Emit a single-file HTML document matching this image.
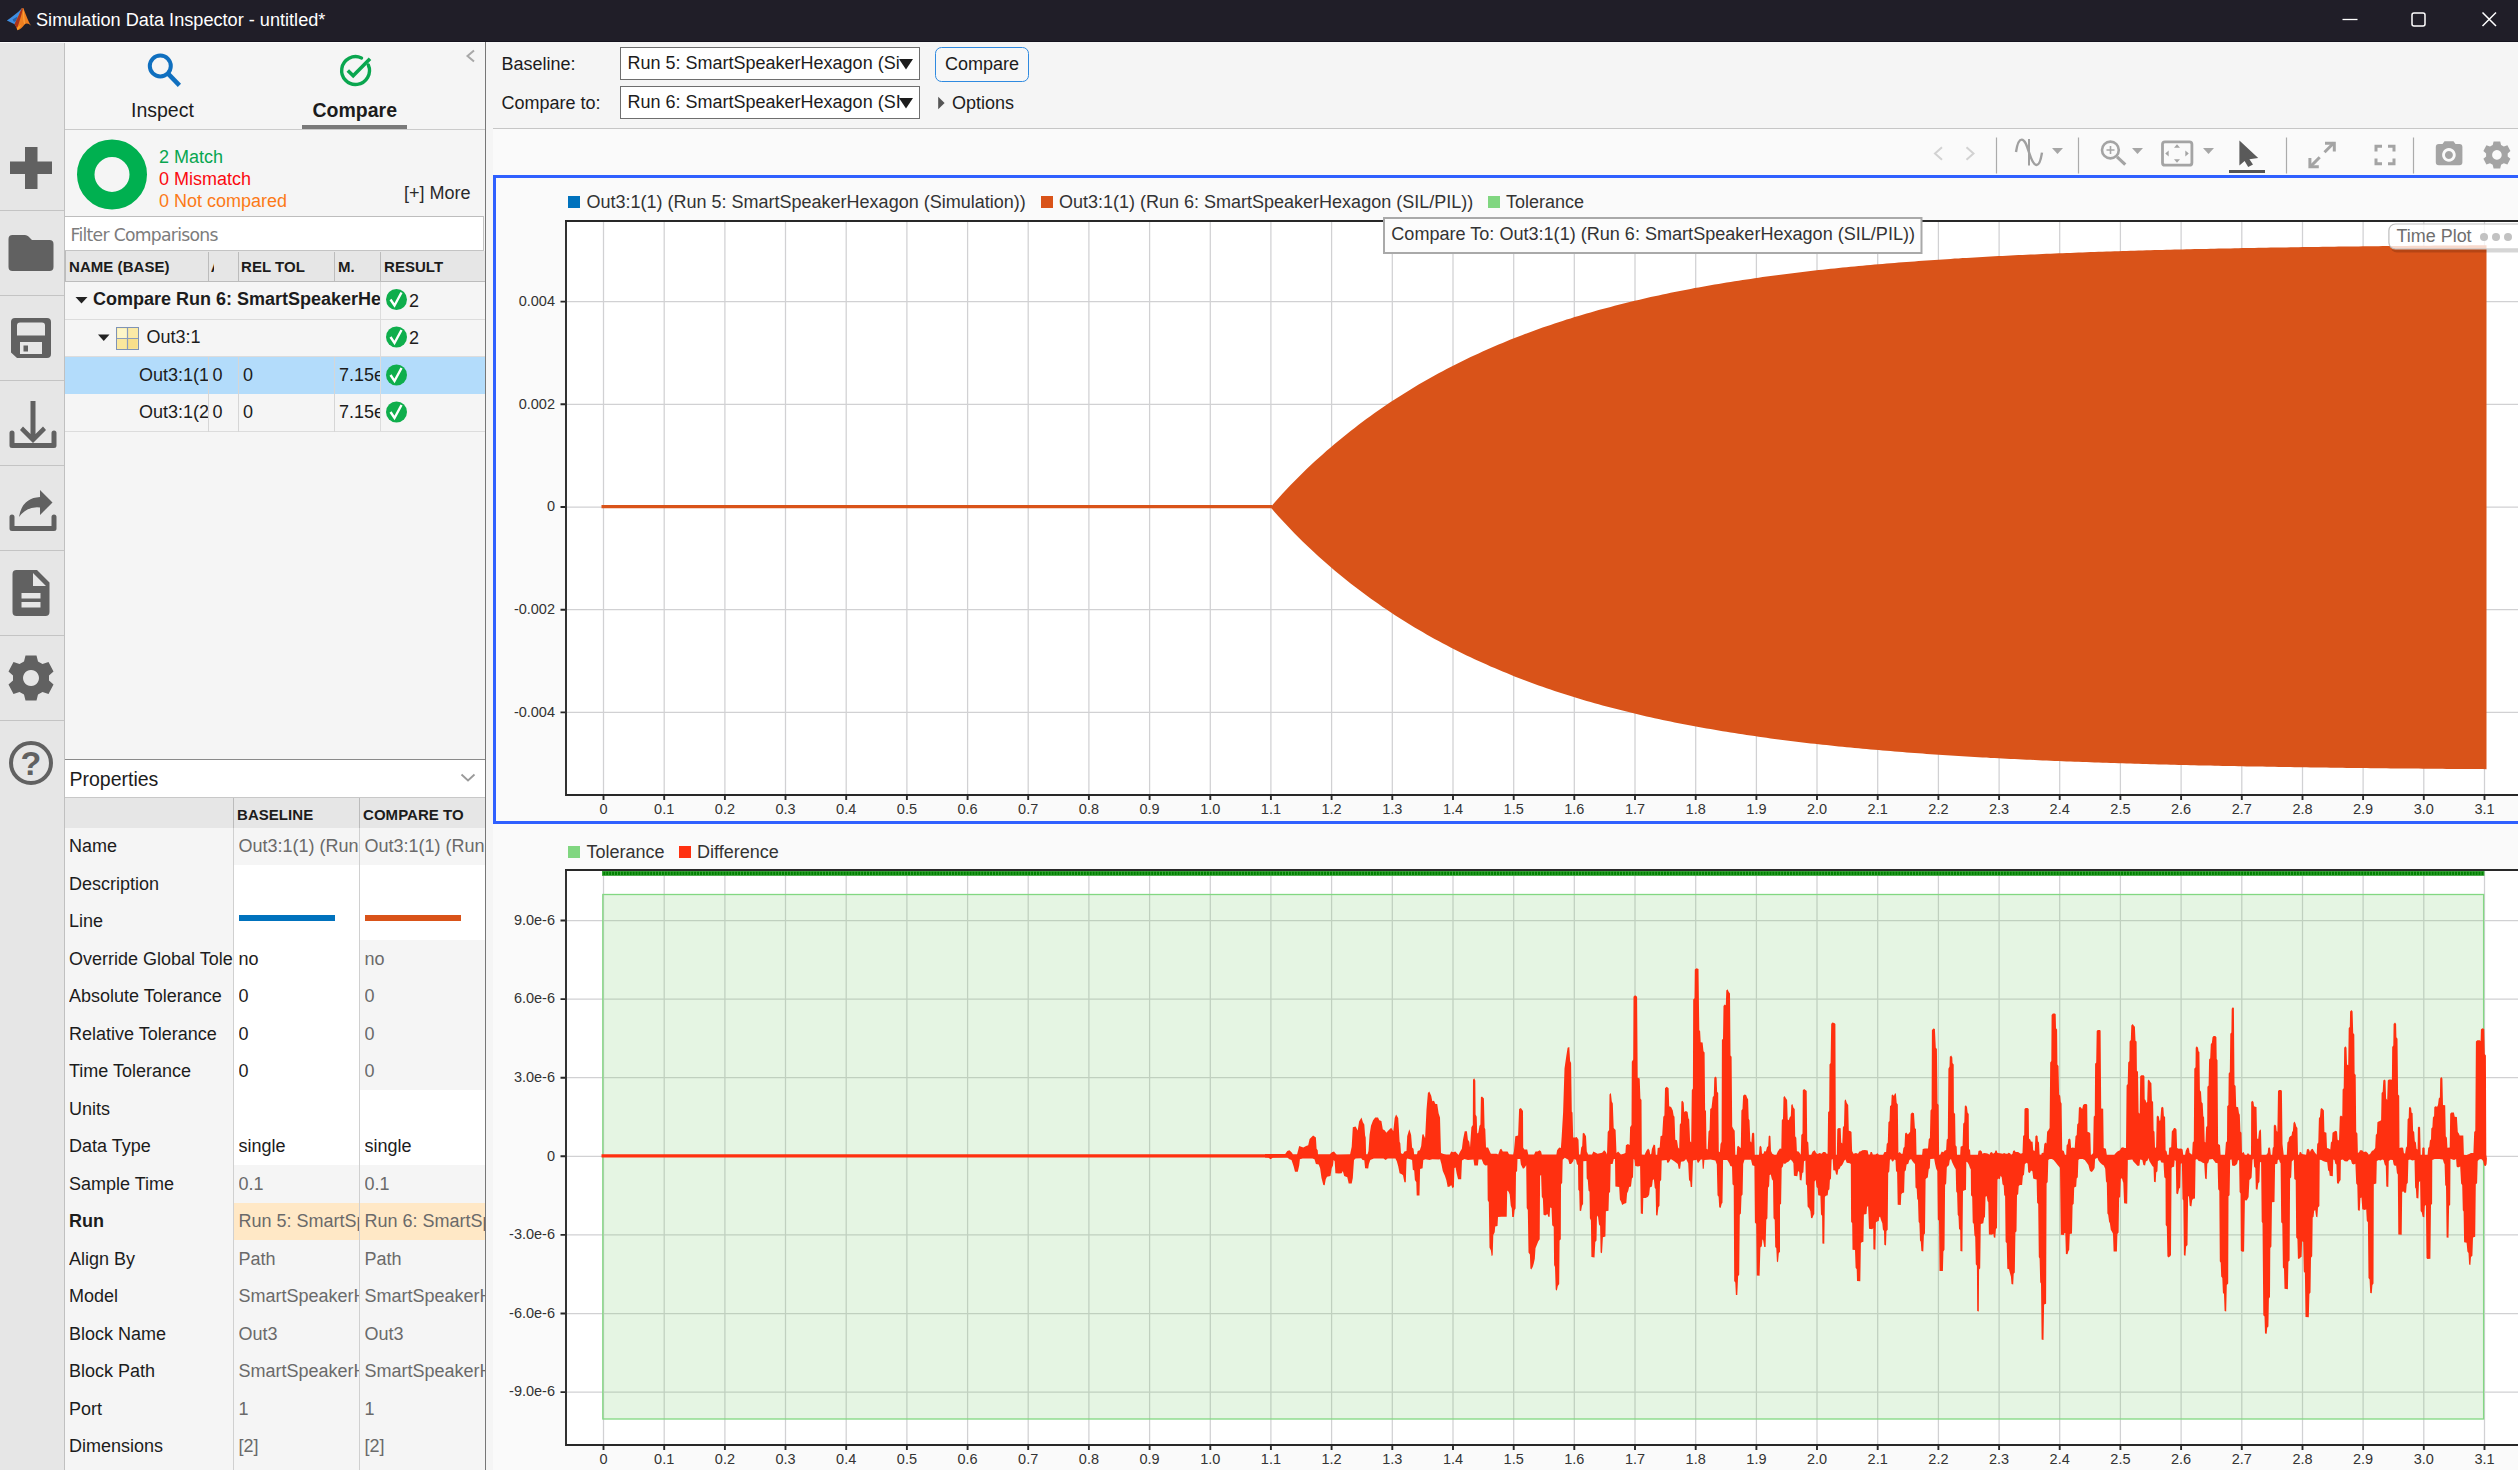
<!DOCTYPE html>
<html lang="en">
<head>
<meta charset="utf-8">
<title>Simulation Data Inspector - untitled*</title>
<style>
*{box-sizing:border-box;margin:0;padding:0}
html,body{width:2518px;height:1470px;overflow:hidden;background:#f5f5f5}
body{font-family:"Liberation Sans",Arial,sans-serif;font-size:18px;color:#1c1c1c;position:relative}
.abs{position:absolute}
.t{position:absolute;white-space:nowrap;line-height:1}
#titlebar{left:0;top:0;width:2518px;height:42px;background:#201e28}
#titlebar .t{color:#fff;font-size:18.15px;left:36px;top:11px}
#ltb{left:0;top:42px;width:64px;height:1428px;background:#e6e6e6}
#ltbline{left:64px;top:43px;width:1px;height:1427px;background:#c0c0c0}
.sep{position:absolute;left:0;width:64px;height:1px;background:#c4c4c4}
#lp{left:65px;top:42px;width:420px;height:1428px;background:#f5f5f5}
#divider{left:485px;top:42px;width:1px;height:1428px;background:#777}
.hdr{font-weight:bold;font-size:15px;letter-spacing:0.05px;color:#1c1c1c}
.row{position:absolute;left:65px;width:420px;height:37.5px}
.gray{color:#6a6a6a}
</style>
</head>
<body>
<div id="titlebar" class="abs">
<div class="abs tb-dark" style="left:0;top:41px;width:2518px;height:1px;background:#15131e"></div>
<svg class="abs" style="left:6px;top:7px" width="27" height="25" viewBox="0 0 27 25">
<path d="M0.9 13.5 C6 10 11.5 6 15.9 1.3 L16.6 2.6 C13.5 7.5 11 12.5 8.6 17.3 Z" fill="#3f8fe2"/>
<path d="M6.5 12.5 L11.5 9.5 L10.5 13.5 L8 15 Z" fill="#2a62a8"/>
<path d="M15.9 1.3 L17.3 0.9 C19 5 21.5 13 25.2 18.8 C22.5 16.3 20.2 15.8 18.6 17.6 C16.5 20.3 14 23 11.6 23.3 L9.6 18.8 L8.6 17.3 C11.5 11 13.8 6 15.9 1.3 Z" fill="#ef7f1f"/>
<path d="M15.9 1.3 L16.9 1.4 C15.5 8 13.5 15 10.9 21.6 L9.6 18.8 L8.6 17.3 C11.5 11 13.8 6 15.9 1.3 Z" fill="#a9331c"/>
<path d="M17.3 0.9 C18.2 6 18.4 11 18.9 17.3 C17.6 17 16.8 11 17.3 0.9 Z" fill="#ffa23e"/>
<path d="M11.6 23.3 C13 21.5 14.2 19.8 15.2 18 L12.2 19.8 L10.9 21.6 Z" fill="#ffa028"/>
</svg>
<div class="t">Simulation Data Inspector - untitled*</div>
<svg class="abs" style="left:2330px;top:5px" width="180" height="30" viewBox="0 0 180 30">
<path d="M12.5 14.5 H27.5" stroke="#fff" stroke-width="1.3" fill="none"/>
<rect x="82" y="8" width="13" height="13" rx="2" stroke="#fff" stroke-width="1.5" fill="none"/>
<path d="M152.5 7.5 L166 21 M166 7.5 L152.5 21" stroke="#fff" stroke-width="1.5" fill="none"/>
</svg>
</div>
<div class="abs" style="left:0;top:42px;width:485px;height:1px;background:#fcfcfc;z-index:5"></div>
<div id="ltb" class="abs"></div>
<div id="ltbline" class="abs"></div>
<div class="sep" style="top:210px"></div>
<div class="sep" style="top:295px"></div>
<div class="sep" style="top:380px"></div>
<div class="sep" style="top:465px"></div>
<div class="sep" style="top:550px"></div>
<div class="sep" style="top:635px"></div>
<div class="sep" style="top:720px"></div>
<svg class="abs" style="left:0;top:130px" width="64" height="680" viewBox="0 130 64 680" fill="#616161">
<!-- plus -->
<path d="M25 147 H37.5 V161.5 H52 V174 H37.5 V189 H25 V174 H10 V161.5 H25 Z"/>
<!-- folder -->
<path d="M12.5 235 H25 Q27 235 28.5 236.5 L32 240 H49.5 Q53.5 240 53.5 244 V267 Q53.5 271 49.5 271 H12.5 Q8.5 271 8.5 267 V239 Q8.5 235 12.5 235 Z"/>
<!-- save -->
<path fill-rule="evenodd" d="M15 318 H47 Q51 318 51 322 V354 Q51 358 47 358 H17 L11 352.5 V322 Q11 318 15 318 Z M20 322.5 Q17 322.5 17 325.5 V335.5 H45 V325.5 Q45 322.5 42 322.5 Z M20 342 V354 H42 V342 Z M23.5 345.5 H28 V351.5 H23.5 Z"/>
<!-- download -->
<path d="M30.5 401 H35.500 V434 L43 426.500 L46 430 L33 443 L20 430 L23 426.500 L30.500 434 Z"/>
<path d="M12 433 V445.500 H54 V433" stroke="#616161" stroke-width="5" fill="none" stroke-linejoin="round" stroke-linecap="round"/>
<!-- share -->
<path d="M12 517 V528.500 H54 V517" stroke="#616161" stroke-width="5" fill="none" stroke-linejoin="round" stroke-linecap="round"/>
<path d="M40 490 L52.500 502.500 L40 515 V507.500 Q27 506 19 517 Q22 498 40 497 Z"/>
<!-- doc -->
<path fill-rule="evenodd" d="M16.500 570 H37 L49.500 582.500 V612 Q49.500 616 45.500 616 H16.500 Q12.500 616 12.500 612 V574 Q12.500 570 16.500 570 Z M33 573 V586 H46 Z M21.500 593 V598.500 H40.500 V593 Z M21.500 602 V607.500 H40.500 V602 Z"/>
<!-- gear -->
<g transform="translate(31,678)">
<path fill-rule="evenodd" d="M-5.500 -22.500 H5.500 L7 -16.500 L11.500 -14 L17.500 -16 L22.500 -6.500 L18 -2.500 V2.500 L22.500 6.500 L17.500 16 L11.500 14 L7 16.500 L5.500 22.500 H-5.500 L-7 16.500 L-11.500 14 L-17.500 16 L-22.500 6.500 L-18 2.500 V-2.500 L-22.500 -6.500 L-17.500 -16 L-11.500 -14 L-7 -16.500 Z M0 -8 A8 8 0 1 0 0.010 -8 Z"/>
</g>
<!-- help -->
<circle cx="31" cy="763" r="20" fill="none" stroke="#616161" stroke-width="4"/>
<text x="31" y="775" text-anchor="middle" font-family="Liberation Sans, Arial, sans-serif" font-weight="bold" font-size="34" fill="#616161">?</text>
</svg>
<div id="lp" class="abs"></div>
<!-- tabs -->
<svg class="abs" style="left:140px;top:48px" width="50" height="46" viewBox="140 48 50 46">
<circle cx="160.300" cy="66" r="10.500" fill="none" stroke="#0f6fbf" stroke-width="4"/>
<path d="M167.800 73.400 L179.400 85.400" stroke="#0f6fbf" stroke-width="4.500" fill="none"/>
</svg>
<div class="t" style="left:131px;top:101px;font-size:19.5px">Inspect</div>
<svg class="abs" style="left:335px;top:50px" width="42" height="42" viewBox="335 50 42 42">
<path d="M368.300 65 A13.900 13.900 0 1 1 361.500 58" fill="none" stroke="#0aa64f" stroke-width="3.400" stroke-linecap="round"/>
<path d="M347.800 70.400 L353.200 75.800 L370 58.800" fill="none" stroke="#0aa64f" stroke-width="3.600"/>
</svg>
<div class="t" style="left:312.500px;top:101px;font-size:19.5px;font-weight:bold">Compare</div>
<div class="abs" style="left:302px;top:125.300px;width:105px;height:3.700px;background:#7a7a7a"></div>
<svg class="abs" style="left:462px;top:46px" width="16" height="20" viewBox="0 0 16 20"><path d="M12 4.500 L5.500 10 L12 15.500" fill="none" stroke="#a8a8a8" stroke-width="2"/></svg>
<div class="abs" style="left:65px;top:129px;width:420px;height:1px;background:#cbcbcb"></div>
<!-- summary -->
<svg class="abs" style="left:75px;top:136.600px" width="76" height="76" viewBox="0 0 76 76"><circle cx="37" cy="37.500" r="26.250" fill="none" stroke="#00b050" stroke-width="17.500"/></svg>
<div class="t" style="left:159px;top:147.800px;font-size:18px;color:#08a650">2 Match</div>
<div class="t" style="left:159px;top:169.800px;font-size:18px;color:#fb0a10">0 Mismatch</div>
<div class="t" style="left:159px;top:191.800px;font-size:18px;color:#fc7a18">0 Not compared</div>
<div class="t" style="left:404px;top:184px;font-size:18px;color:#2a2a2a">[+] More</div>
<!-- filter -->
<div class="abs" style="left:65px;top:216px;width:419px;height:35px;background:#fff;border-top:1.300px solid #bdbdbd;border-bottom:1px solid #c4c4c4;border-right:1px solid #c4c4c4"></div>
<div class="t" style="left:70.500px;top:226.500px;font-size:17.2px;color:#7c7c7c;font-family:'DejaVu Sans','Liberation Sans',sans-serif;letter-spacing:-0.7px">Filter Comparisons</div>
<!-- table header -->
<div class="abs" style="left:65px;top:251px;width:420px;height:31px;background:#e6e6e6;border-bottom:1.300px solid #bcbcbc;border-left:1px solid #bcbcbc"></div>
<div class="abs" style="left:208px;top:252px;width:1px;height:29px;background:#bcbcbc"></div>
<div class="abs" style="left:238px;top:252px;width:1px;height:29px;background:#bcbcbc"></div>
<div class="abs" style="left:334px;top:252px;width:1px;height:29px;background:#bcbcbc"></div>
<div class="abs" style="left:380px;top:252px;width:1px;height:29px;background:#bcbcbc"></div>
<div class="t hdr" style="left:69px;top:259px">NAME (BASE)</div>
<div class="abs" style="left:210.800px;top:259px;width:2.800px;height:16px;overflow:hidden"><div class="t hdr" style="left:0;top:0">A</div></div>
<div class="t hdr" style="left:241px;top:259px">REL TOL</div>
<div class="t hdr" style="left:338px;top:259px">M.</div>
<div class="t hdr" style="left:384px;top:259px">RESULT</div>
<!-- rows -->
<div class="abs" style="left:65px;top:319px;width:420px;height:1px;background:#dcdcdc"></div>
<div class="abs" style="left:65px;top:356px;width:420px;height:1px;background:#dcdcdc"></div>
<div class="abs" style="left:65px;top:357px;width:420px;height:37px;background:#b3dcfb"></div>
<div class="abs" style="left:65px;top:431px;width:420px;height:1px;background:#dcdcdc"></div>
<div class="abs" style="left:380px;top:282px;width:1px;height:150px;background:#dcdcdc"></div>
<div class="abs" style="left:208px;top:357px;width:1px;height:75px;background:#d6d6d6"></div>
<div class="abs" style="left:238px;top:357px;width:1px;height:75px;background:#d6d6d6"></div>
<div class="abs" style="left:334px;top:357px;width:1px;height:75px;background:#d6d6d6"></div>
<svg class="abs" style="left:74px;top:294px" width="40" height="52" viewBox="74 294 40 52" fill="#222">
<path d="M75.500 297 H87.500 L81.500 303.500 Z"/>
<path d="M98 334.500 H109.500 L103.750 341 Z"/>
</svg>
<div class="abs" style="left:93px;top:289px;width:287px;height:24px;overflow:hidden"><div class="t" style="left:0;top:0.500px;font-weight:bold;font-size:18px">Compare Run 6: SmartSpeakerHexagon</div></div>
<svg class="abs" style="left:116px;top:327px" width="24" height="24" viewBox="0 0 24 24">
<rect x="0.500" y="0.500" width="22" height="22" fill="#fbe9a0" stroke="#7f93b5" stroke-width="1"/>
<rect x="1.500" y="1.500" width="9.500" height="9.500" fill="#fdf6c8"/>
<rect x="12" y="1.500" width="9.500" height="9.500" fill="#fbeaa6"/>
<rect x="1.500" y="12" width="9.500" height="9.500" fill="#fae79c"/>
<rect x="12" y="12" width="9.500" height="9.500" fill="#f8df8a"/>
<path d="M11.500 1 V22 M1 11.500 H22" stroke="#8a9cbc" stroke-width="1.200"/>
</svg>
<div class="t" style="left:146.500px;top:327.500px">Out3:1</div>
<div class="abs" style="left:139px;top:363px;width:69px;height:26px;overflow:hidden"><div class="t" style="left:0;top:3px">Out3:1(1)</div></div>
<div class="abs" style="left:139px;top:400px;width:69px;height:26px;overflow:hidden"><div class="t" style="left:0;top:2.500px">Out3:1(2)</div></div>
<div class="t" style="left:212.500px;top:366px">0</div><div class="t" style="left:243px;top:366px">0</div>
<div class="t" style="left:212.500px;top:402.500px">0</div><div class="t" style="left:243px;top:402.500px">0</div>
<div class="abs" style="left:339px;top:363px;width:41px;height:26px;overflow:hidden"><div class="t" style="left:0;top:3px">7.15e-06</div></div>
<div class="abs" style="left:339px;top:400px;width:41px;height:26px;overflow:hidden"><div class="t" style="left:0;top:2.500px">7.15e-06</div></div>
<svg class="abs" style="left:384px;top:286px" width="40" height="140" viewBox="384 286 40 140">
<g id="chk"><circle cx="396.500" cy="299.500" r="10.500" fill="#0fae4c"/><path d="M390.500 299.500 L394.500 305.500 L401.500 292.500" fill="none" stroke="#fff" stroke-width="2.400"/></g>
<use href="#chk" y="37.500"/><use href="#chk" y="75.500"/><use href="#chk" y="112.500"/>
</svg>
<div class="t" style="left:409px;top:291.500px">2</div>
<div class="t" style="left:409px;top:329px">2</div>
<!-- properties -->
<div class="abs" style="left:65px;top:759px;width:420px;height:39px;background:#fff;border-top:1.500px solid #8a8a8a;border-bottom:1px solid #c8c8c8"></div>
<div class="t" style="left:69.500px;top:769.700px;font-size:19.5px">Properties</div>
<svg class="abs" style="left:458px;top:770px" width="20" height="16" viewBox="0 0 20 16"><path d="M3.500 4.500 L10 10.500 L16.500 4.500" fill="none" stroke="#9a9a9a" stroke-width="1.800"/></svg>
<div class="abs" style="left:65px;top:798px;width:420px;height:30px;background:#e6e6e6"></div>
<div class="abs" style="left:233px;top:798px;width:1px;height:672px;background:#d0d0d0"></div>
<div class="abs" style="left:359px;top:798px;width:1px;height:672px;background:#d0d0d0"></div>
<div class="abs" style="left:233px;top:798px;width:1px;height:30px;background:#bcbcbc"></div>
<div class="abs" style="left:359px;top:798px;width:1px;height:30px;background:#bcbcbc"></div>
<div class="t hdr" style="left:237px;top:807px">BASELINE</div>
<div class="t hdr" style="left:363px;top:807px">COMPARE TO</div>
<div class="abs" style="left:69px;top:833.5px;width:164px;height:26px;overflow:hidden"><div class="t" style="left:0;top:3.500px">Name</div></div>
<div class="abs" style="left:238.5px;top:833.5px;width:120.5px;height:26px;overflow:hidden"><div class="t" style="left:0;top:3.500px;color:#6a6a6a">Out3:1(1) (Run 5</div></div>
<div class="abs" style="left:364.5px;top:833.5px;width:120.5px;height:26px;overflow:hidden"><div class="t" style="left:0;top:3.500px;color:#6a6a6a">Out3:1(1) (Run 6</div></div>
<div class="abs" style="left:234px;top:865.0px;width:125px;height:37.500px;background:#ffffff"></div>
<div class="abs" style="left:360px;top:865.0px;width:125px;height:37.500px;background:#ffffff"></div>
<div class="abs" style="left:69px;top:871.0px;width:164px;height:26px;overflow:hidden"><div class="t" style="left:0;top:3.500px">Description</div></div>
<div class="abs" style="left:234px;top:902.5px;width:125px;height:37.500px;background:#ffffff"></div>
<div class="abs" style="left:360px;top:902.5px;width:125px;height:37.500px;background:#ffffff"></div>
<div class="abs" style="left:69px;top:908.5px;width:164px;height:26px;overflow:hidden"><div class="t" style="left:0;top:3.500px">Line</div></div>
<div class="abs" style="left:234px;top:940.0px;width:125px;height:37.500px;background:#ffffff"></div>
<div class="abs" style="left:69px;top:946.0px;width:164px;height:26px;overflow:hidden"><div class="t" style="left:0;top:3.500px">Override Global Tolerance</div></div>
<div class="abs" style="left:238.5px;top:946.0px;width:120.5px;height:26px;overflow:hidden"><div class="t" style="left:0;top:3.500px;color:#1c1c1c">no</div></div>
<div class="abs" style="left:364.5px;top:946.0px;width:120.5px;height:26px;overflow:hidden"><div class="t" style="left:0;top:3.500px;color:#6a6a6a">no</div></div>
<div class="abs" style="left:234px;top:977.5px;width:125px;height:37.500px;background:#ffffff"></div>
<div class="abs" style="left:69px;top:983.5px;width:164px;height:26px;overflow:hidden"><div class="t" style="left:0;top:3.500px">Absolute Tolerance</div></div>
<div class="abs" style="left:238.5px;top:983.5px;width:120.5px;height:26px;overflow:hidden"><div class="t" style="left:0;top:3.500px;color:#1c1c1c">0</div></div>
<div class="abs" style="left:364.5px;top:983.5px;width:120.5px;height:26px;overflow:hidden"><div class="t" style="left:0;top:3.500px;color:#6a6a6a">0</div></div>
<div class="abs" style="left:234px;top:1015.0px;width:125px;height:37.500px;background:#ffffff"></div>
<div class="abs" style="left:69px;top:1021.0px;width:164px;height:26px;overflow:hidden"><div class="t" style="left:0;top:3.500px">Relative Tolerance</div></div>
<div class="abs" style="left:238.5px;top:1021.0px;width:120.5px;height:26px;overflow:hidden"><div class="t" style="left:0;top:3.500px;color:#1c1c1c">0</div></div>
<div class="abs" style="left:364.5px;top:1021.0px;width:120.5px;height:26px;overflow:hidden"><div class="t" style="left:0;top:3.500px;color:#6a6a6a">0</div></div>
<div class="abs" style="left:234px;top:1052.5px;width:125px;height:37.500px;background:#ffffff"></div>
<div class="abs" style="left:69px;top:1058.5px;width:164px;height:26px;overflow:hidden"><div class="t" style="left:0;top:3.500px">Time Tolerance</div></div>
<div class="abs" style="left:238.5px;top:1058.5px;width:120.5px;height:26px;overflow:hidden"><div class="t" style="left:0;top:3.500px;color:#1c1c1c">0</div></div>
<div class="abs" style="left:364.5px;top:1058.5px;width:120.5px;height:26px;overflow:hidden"><div class="t" style="left:0;top:3.500px;color:#6a6a6a">0</div></div>
<div class="abs" style="left:234px;top:1090.0px;width:125px;height:37.500px;background:#ffffff"></div>
<div class="abs" style="left:360px;top:1090.0px;width:125px;height:37.500px;background:#ffffff"></div>
<div class="abs" style="left:69px;top:1096.0px;width:164px;height:26px;overflow:hidden"><div class="t" style="left:0;top:3.500px">Units</div></div>
<div class="abs" style="left:234px;top:1127.5px;width:125px;height:37.500px;background:#ffffff"></div>
<div class="abs" style="left:360px;top:1127.5px;width:125px;height:37.500px;background:#ffffff"></div>
<div class="abs" style="left:69px;top:1133.5px;width:164px;height:26px;overflow:hidden"><div class="t" style="left:0;top:3.500px">Data Type</div></div>
<div class="abs" style="left:238.5px;top:1133.5px;width:120.5px;height:26px;overflow:hidden"><div class="t" style="left:0;top:3.500px;color:#1c1c1c">single</div></div>
<div class="abs" style="left:364.5px;top:1133.5px;width:120.5px;height:26px;overflow:hidden"><div class="t" style="left:0;top:3.500px;color:#1c1c1c">single</div></div>
<div class="abs" style="left:69px;top:1171.0px;width:164px;height:26px;overflow:hidden"><div class="t" style="left:0;top:3.500px">Sample Time</div></div>
<div class="abs" style="left:238.5px;top:1171.0px;width:120.5px;height:26px;overflow:hidden"><div class="t" style="left:0;top:3.500px;color:#6a6a6a">0.1</div></div>
<div class="abs" style="left:364.5px;top:1171.0px;width:120.5px;height:26px;overflow:hidden"><div class="t" style="left:0;top:3.500px;color:#6a6a6a">0.1</div></div>
<div class="abs" style="left:234px;top:1202.5px;width:125px;height:37.500px;background:#ffe8c6"></div>
<div class="abs" style="left:360px;top:1202.5px;width:125px;height:37.500px;background:#ffe8c6"></div>
<div class="abs" style="left:69px;top:1208.5px;width:164px;height:26px;overflow:hidden"><div class="t" style="left:0;top:3.500px;font-weight:bold">Run</div></div>
<div class="abs" style="left:238.5px;top:1208.5px;width:120.5px;height:26px;overflow:hidden"><div class="t" style="left:0;top:3.500px;color:#6a6a6a">Run 5: SmartSpeakerHexagon</div></div>
<div class="abs" style="left:364.5px;top:1208.5px;width:120.5px;height:26px;overflow:hidden"><div class="t" style="left:0;top:3.500px;color:#6a6a6a">Run 6: SmartSpeakerHexagon</div></div>
<div class="abs" style="left:69px;top:1246.0px;width:164px;height:26px;overflow:hidden"><div class="t" style="left:0;top:3.500px">Align By</div></div>
<div class="abs" style="left:238.5px;top:1246.0px;width:120.5px;height:26px;overflow:hidden"><div class="t" style="left:0;top:3.500px;color:#6a6a6a">Path</div></div>
<div class="abs" style="left:364.5px;top:1246.0px;width:120.5px;height:26px;overflow:hidden"><div class="t" style="left:0;top:3.500px;color:#6a6a6a">Path</div></div>
<div class="abs" style="left:69px;top:1283.5px;width:164px;height:26px;overflow:hidden"><div class="t" style="left:0;top:3.500px">Model</div></div>
<div class="abs" style="left:238.5px;top:1283.5px;width:120.5px;height:26px;overflow:hidden"><div class="t" style="left:0;top:3.500px;color:#6a6a6a">SmartSpeakerHexagon</div></div>
<div class="abs" style="left:364.5px;top:1283.5px;width:120.5px;height:26px;overflow:hidden"><div class="t" style="left:0;top:3.500px;color:#6a6a6a">SmartSpeakerHexagon</div></div>
<div class="abs" style="left:69px;top:1321.0px;width:164px;height:26px;overflow:hidden"><div class="t" style="left:0;top:3.500px">Block Name</div></div>
<div class="abs" style="left:238.5px;top:1321.0px;width:120.5px;height:26px;overflow:hidden"><div class="t" style="left:0;top:3.500px;color:#6a6a6a">Out3</div></div>
<div class="abs" style="left:364.5px;top:1321.0px;width:120.5px;height:26px;overflow:hidden"><div class="t" style="left:0;top:3.500px;color:#6a6a6a">Out3</div></div>
<div class="abs" style="left:69px;top:1358.5px;width:164px;height:26px;overflow:hidden"><div class="t" style="left:0;top:3.500px">Block Path</div></div>
<div class="abs" style="left:238.5px;top:1358.5px;width:120.5px;height:26px;overflow:hidden"><div class="t" style="left:0;top:3.500px;color:#6a6a6a">SmartSpeakerHexagon/Out3</div></div>
<div class="abs" style="left:364.5px;top:1358.5px;width:120.5px;height:26px;overflow:hidden"><div class="t" style="left:0;top:3.500px;color:#6a6a6a">SmartSpeakerHexagon/Out3</div></div>
<div class="abs" style="left:69px;top:1396.0px;width:164px;height:26px;overflow:hidden"><div class="t" style="left:0;top:3.500px">Port</div></div>
<div class="abs" style="left:238.5px;top:1396.0px;width:120.5px;height:26px;overflow:hidden"><div class="t" style="left:0;top:3.500px;color:#6a6a6a">1</div></div>
<div class="abs" style="left:364.5px;top:1396.0px;width:120.5px;height:26px;overflow:hidden"><div class="t" style="left:0;top:3.500px;color:#6a6a6a">1</div></div>
<div class="abs" style="left:69px;top:1433.5px;width:164px;height:26px;overflow:hidden"><div class="t" style="left:0;top:3.500px">Dimensions</div></div>
<div class="abs" style="left:238.5px;top:1433.5px;width:120.5px;height:26px;overflow:hidden"><div class="t" style="left:0;top:3.500px;color:#6a6a6a">[2]</div></div>
<div class="abs" style="left:364.5px;top:1433.5px;width:120.5px;height:26px;overflow:hidden"><div class="t" style="left:0;top:3.500px;color:#6a6a6a">[2]</div></div>
<div class="abs" style="left:239px;top:915px;width:96px;height:6px;background:#0072bd"></div>
<div class="abs" style="left:365px;top:915px;width:96px;height:6px;background:#d95319"></div>
<div id="divider" class="abs"></div>
<!-- right top controls -->
<div class="abs" style="left:493px;top:129px;width:2025px;height:1341px;background:#fafafa"></div>
<div class="abs" style="left:493px;top:128px;width:2025px;height:1px;background:#c6c6c6"></div>
<div class="t" style="left:501.500px;top:55px">Baseline:</div>
<div class="t" style="left:501.500px;top:94px">Compare to:</div>
<div class="abs" style="left:620px;top:47px;width:300px;height:32.500px;background:#fff;border:1px solid #6e6e6e"></div>
<div class="abs" style="left:620px;top:86px;width:300px;height:32.500px;background:#fff;border:1px solid #6e6e6e"></div>
<div class="abs" style="left:627.500px;top:50px;width:272px;height:26px;overflow:hidden"><div class="t" style="left:0;top:4px">Run 5: SmartSpeakerHexagon (Simulation)</div></div>
<div class="abs" style="left:627.500px;top:89px;width:272px;height:26px;overflow:hidden"><div class="t" style="left:0;top:4px">Run 6: SmartSpeakerHexagon (SIL/PIL)</div></div>
<svg class="abs" style="left:896px;top:47px" width="22" height="72" viewBox="896 47 22 72" fill="#1c1c1c"><path d="M899 59 H913 L906 69.500 Z"/><path d="M899 98 H913 L906 108.500 Z"/></svg>
<div class="abs" style="left:935px;top:47px;width:94px;height:35px;border:1.300px solid #2f8ae0;border-radius:6.500px;background:#f7f7f7"></div>
<div class="t" style="left:945px;top:55px">Compare</div>
<svg class="abs" style="left:936px;top:94px" width="12" height="18" viewBox="0 0 12 18"><path d="M2.200 2.800 L8.600 9 L2.200 15.200 Z" fill="#555"/></svg>
<div class="t" style="left:952px;top:94px">Options</div>
<!-- chart toolbar -->
<svg class="abs" style="left:1920px;top:130px" width="598" height="46" viewBox="1920 130 598 46">
<g fill="none" stroke="#d2d2d2" stroke-width="2">
<path d="M1942 147.300 L1935 153.500 L1942 159.700"/>
<path d="M1966.500 147.300 L1973.500 153.500 L1966.500 159.700"/>
</g>
<g stroke="#ababab" stroke-width="1.200">
<path d="M1996.500 137.500 V173.500"/><path d="M2078.500 137.500 V173.500"/><path d="M2286.500 137.500 V173.500"/><path d="M2413.500 137.500 V173.500"/>
</g>
<!-- sine -->
<path d="M2016 152 C2017.500 142 2019.500 139.600 2021.700 139.600 C2025 139.600 2027 146 2029 152.300 C2031 158.500 2033.500 165 2036.700 165 C2039.300 165 2041 159 2042 152.600" fill="none" stroke="#a0a0a0" stroke-width="2.400"/>
<path d="M2029 139 V165.500" stroke="#a0a0a0" stroke-width="2" fill="none"/>
<g fill="#a6a6a6">
<path d="M2052 148 H2063 L2057.500 154 Z"/>
<path d="M2132 148 H2143 L2137.500 154 Z"/>
<path d="M2203 148 H2214 L2208.500 154 Z"/>
</g>
<!-- zoom -->
<circle cx="2110.400" cy="150" r="8.400" fill="none" stroke="#a4a4a4" stroke-width="2.600"/>
<path d="M2117 156.800 L2125.300 164.600" stroke="#a4a4a4" stroke-width="3.200" fill="none"/>
<path d="M2106.500 150 H2114.500 M2110.500 146 V154" stroke="#a6a6a6" stroke-width="1.600" fill="none"/>
<!-- fit -->
<rect x="2162.500" y="141.800" width="29.400" height="23.400" rx="2.500" fill="none" stroke="#a4a4a4" stroke-width="2.800"/>
<g fill="#a4a4a4"><path d="M2174 147.700 L2177 144.200 L2180 147.700 Z"/><path d="M2174 159.300 L2177 162.800 L2180 159.300 Z"/><path d="M2168.700 150.500 L2165.200 153.500 L2168.700 156.500 Z"/><path d="M2185.300 150.500 L2188.800 153.500 L2185.300 156.500 Z"/></g>
<!-- cursor -->
<path d="M2239.400 140.500 L2239.400 165.500 L2244.600 161 L2248.200 167 L2253 164.500 L2249.400 159.200 L2258.200 158.100 Z" fill="#5a5a5a"/>
<rect x="2229" y="170" width="36" height="3" fill="#555"/>
<!-- expand -->
<g fill="none" stroke="#a4a4a4" stroke-width="3">
<path d="M2324.500 152.300 L2334 142.800"/><path d="M2325 143.200 H2334.300 V151.600"/>
<path d="M2319.700 157.300 L2310.400 166.600"/><path d="M2309.900 158 V166.700 H2318.800"/>
</g>
<!-- fullscreen -->
<g fill="none" stroke="#a4a4a4" stroke-width="3">
<path d="M2376 151.600 V146.300 H2382"/><path d="M2388 146.300 H2394 V151.600"/><path d="M2376 158.500 V163.800 H2382"/><path d="M2388 163.800 H2394 V158.500"/>
</g>
<!-- camera -->
<path fill-rule="evenodd" fill="#a4a4a4" d="M2444.500 141.200 H2453.500 L2455.500 144 H2459.400 Q2462.400 144 2462.400 147 V162.300 Q2462.400 165.300 2459.400 165.300 H2438.800 Q2435.800 165.300 2435.800 162.300 V147 Q2435.800 144 2438.800 144 H2442.500 Z M2448.900 148.100 A6.800 6.800 0 1 0 2448.910 148.100 Z M2448.900 150.900 A4 4 0 1 1 2448.890 150.900 Z"/>
<!-- gear -->
<g transform="translate(2496.900,154.900) scale(0.6)">
<path fill-rule="evenodd" fill="#a4a4a4" d="M-5.500 -22.500 H5.500 L7 -16.500 L11.500 -14 L17.500 -16 L22.500 -6.500 L18 -2.500 V2.500 L22.500 6.500 L17.500 16 L11.500 14 L7 16.500 L5.500 22.500 H-5.500 L-7 16.500 L-11.500 14 L-17.500 16 L-22.500 6.500 L-18 2.500 V-2.500 L-22.500 -6.500 L-17.500 -16 L-11.500 -14 L-7 -16.500 Z M0 -8 A8 8 0 1 0 0.010 -8 Z"/>
</g>
</svg>
<!-- top chart -->
<div class="abs" style="left:493px;top:175px;width:2040px;height:649px;border:3px solid #2f60ff;background:#fafafa"></div>
<svg class="abs" style="left:493px;top:175px" width="2025" height="655" viewBox="493 175 2025 655">
<rect x="566" y="221" width="1960" height="574" fill="#fff"/>
<path d="M603.5 222V794M664.2 222V794M724.9 222V794M785.5 222V794M846.2 222V794M906.9 222V794M967.6 222V794M1028.2 222V794M1088.9 222V794M1149.6 222V794M1210.3 222V794M1270.9 222V794M1331.6 222V794M1392.3 222V794M1453 222V794M1513.7 222V794M1574.3 222V794M1635 222V794M1695.7 222V794M1756.4 222V794M1817 222V794M1877.7 222V794M1938.4 222V794M1999.1 222V794M2059.7 222V794M2120.4 222V794M2181.1 222V794M2241.8 222V794M2302.5 222V794M2363.1 222V794M2423.8 222V794M2484.5 222V794" stroke="#d1d1d3" stroke-width="1.25" fill="none"/>
<path d="M567 301.6H2518M567 404.3H2518M567 507H2518M567 609.7H2518M567 712.4H2518" stroke="#d1d1d3" stroke-width="1.25" fill="none"/>
<path d="M1270.6 507.2 L1274.6 502.5 L1278.6 498 L1282.6 493.6 L1286.6 489.3 L1290.6 485.1 L1294.6 481 L1298.6 476.9 L1302.6 473 L1306.6 469.1 L1310.6 465.3 L1314.6 461.6 L1318.6 457.9 L1322.6 454.4 L1326.6 450.8 L1330.6 447.4 L1334.6 444 L1338.6 440.7 L1342.6 437.4 L1346.6 434.2 L1350.6 431 L1354.6 427.9 L1358.6 424.8 L1362.6 421.8 L1366.6 418.8 L1370.6 415.9 L1374.6 413.1 L1378.6 410.3 L1382.6 407.5 L1386.6 404.8 L1390.6 402.1 L1394.6 399.5 L1398.6 396.9 L1402.6 394.4 L1406.6 391.9 L1410.6 389.4 L1414.6 387 L1418.6 384.6 L1422.6 382.3 L1426.6 380 L1430.6 377.7 L1434.6 375.5 L1438.6 373.3 L1442.6 371.2 L1446.6 369.1 L1450.6 367 L1454.6 364.9 L1458.6 362.9 L1462.6 361 L1466.6 359 L1470.6 357.1 L1474.6 355.2 L1478.6 353.4 L1482.6 351.6 L1486.6 349.8 L1490.6 348 L1494.6 346.3 L1498.6 344.6 L1502.6 342.9 L1506.6 341.3 L1510.6 339.6 L1514.6 338 L1518.6 336.5 L1522.6 334.9 L1526.6 333.4 L1530.6 331.9 L1534.6 330.5 L1538.6 329 L1542.6 327.6 L1546.6 326.2 L1550.6 324.9 L1554.6 323.5 L1558.6 322.2 L1562.6 320.9 L1566.6 319.6 L1570.6 318.4 L1574.6 317.1 L1578.6 315.9 L1582.6 314.7 L1586.6 313.5 L1590.6 312.4 L1594.6 311.2 L1598.6 310.1 L1602.6 309 L1606.6 307.9 L1610.6 306.9 L1614.6 305.8 L1618.6 304.8 L1622.6 303.8 L1626.6 302.8 L1630.6 301.8 L1634.6 300.8 L1638.6 299.9 L1642.6 298.9 L1646.6 298 L1650.6 297.1 L1654.6 296.2 L1658.6 295.4 L1662.6 294.5 L1666.6 293.7 L1670.6 292.8 L1674.6 292 L1678.6 291.2 L1682.6 290.4 L1686.6 289.7 L1690.6 288.9 L1694.6 288.1 L1698.6 287.4 L1702.6 286.7 L1706.6 286 L1710.6 285.3 L1714.6 284.6 L1718.6 283.9 L1722.6 283.2 L1726.6 282.6 L1730.6 281.9 L1734.6 281.3 L1738.6 280.7 L1742.6 280.1 L1746.6 279.5 L1750.6 278.9 L1754.6 278.3 L1758.6 277.7 L1762.6 277.1 L1766.6 276.6 L1770.6 276 L1774.6 275.5 L1778.6 275 L1782.6 274.4 L1786.6 273.9 L1790.6 273.4 L1794.6 272.9 L1798.6 272.5 L1802.6 272 L1806.6 271.5 L1810.6 271 L1814.6 270.6 L1818.6 270.1 L1822.6 269.7 L1826.6 269.3 L1830.6 268.8 L1834.6 268.4 L1838.6 268 L1842.6 267.6 L1846.6 267.2 L1850.6 266.8 L1854.6 266.4 L1858.6 266.1 L1862.6 265.7 L1866.6 265.3 L1870.6 265 L1874.6 264.6 L1878.6 264.3 L1882.6 263.9 L1886.6 263.6 L1890.6 263.3 L1894.6 262.9 L1898.6 262.6 L1902.6 262.3 L1906.6 262 L1910.6 261.7 L1914.6 261.4 L1918.6 261.1 L1922.6 260.8 L1926.6 260.5 L1930.6 260.2 L1934.6 260 L1938.6 259.7 L1942.6 259.4 L1946.6 259.2 L1950.6 258.9 L1954.6 258.6 L1958.6 258.4 L1962.6 258.1 L1966.6 257.9 L1970.6 257.7 L1974.6 257.4 L1978.6 257.2 L1982.6 257 L1986.6 256.8 L1990.6 256.5 L1994.6 256.3 L1998.6 256.1 L2002.6 255.9 L2006.6 255.7 L2010.6 255.5 L2014.6 255.3 L2018.6 255.1 L2022.6 254.9 L2026.6 254.7 L2030.6 254.6 L2034.6 254.4 L2038.6 254.2 L2042.6 254 L2046.6 253.8 L2050.6 253.7 L2054.6 253.5 L2058.6 253.3 L2062.6 253.2 L2066.6 253 L2070.6 252.9 L2074.6 252.7 L2078.6 252.6 L2082.6 252.4 L2086.6 252.3 L2090.6 252.1 L2094.6 252 L2098.6 251.8 L2102.6 251.7 L2106.6 251.6 L2110.6 251.4 L2114.6 251.3 L2118.6 251.2 L2122.6 251.1 L2126.6 250.9 L2130.6 250.8 L2134.6 250.7 L2138.6 250.6 L2142.6 250.5 L2146.6 250.3 L2150.6 250.2 L2154.6 250.1 L2158.6 250 L2162.6 249.9 L2166.6 249.8 L2170.6 249.7 L2174.6 249.6 L2178.6 249.5 L2182.6 249.4 L2186.6 249.3 L2190.6 249.2 L2194.6 249.1 L2198.6 249 L2202.6 248.9 L2206.6 248.9 L2210.6 248.8 L2214.6 248.7 L2218.6 248.6 L2222.6 248.5 L2226.6 248.4 L2230.6 248.4 L2234.6 248.3 L2238.6 248.2 L2242.6 248.1 L2246.6 248 L2250.6 248 L2254.6 247.9 L2258.6 247.8 L2262.6 247.8 L2266.6 247.7 L2270.6 247.6 L2274.6 247.6 L2278.6 247.5 L2282.6 247.4 L2286.6 247.4 L2290.6 247.3 L2294.6 247.2 L2298.6 247.2 L2302.6 247.1 L2306.6 247.1 L2310.6 247 L2314.6 246.9 L2318.6 246.9 L2322.6 246.8 L2326.6 246.8 L2330.6 246.7 L2334.6 246.7 L2338.6 246.6 L2342.6 246.6 L2346.6 246.5 L2350.6 246.5 L2354.6 246.4 L2358.6 246.4 L2362.6 246.3 L2366.6 246.3 L2370.6 246.2 L2374.6 246.2 L2378.6 246.2 L2382.6 246.1 L2386.6 246.1 L2390.6 246 L2394.6 246 L2398.6 246 L2402.6 245.9 L2406.6 245.9 L2410.6 245.8 L2414.6 245.8 L2418.6 245.8 L2422.6 245.7 L2426.6 245.7 L2430.6 245.7 L2434.6 245.6 L2438.6 245.6 L2442.6 245.6 L2446.6 245.5 L2450.6 245.5 L2454.6 245.5 L2458.6 245.4 L2462.6 245.4 L2466.6 245.4 L2470.6 245.3 L2474.6 245.3 L2478.6 245.3 L2482.6 245.3 L2486.5 245.2 L2486.5 769.2 L2482.6 769.1 L2478.6 769.1 L2474.6 769.1 L2470.6 769.1 L2466.6 769 L2462.6 769 L2458.6 769 L2454.6 768.9 L2450.6 768.9 L2446.6 768.9 L2442.6 768.8 L2438.6 768.8 L2434.6 768.8 L2430.6 768.7 L2426.6 768.7 L2422.6 768.7 L2418.6 768.6 L2414.6 768.6 L2410.6 768.6 L2406.6 768.5 L2402.6 768.5 L2398.6 768.4 L2394.6 768.4 L2390.6 768.4 L2386.6 768.3 L2382.6 768.3 L2378.6 768.2 L2374.6 768.2 L2370.6 768.2 L2366.6 768.1 L2362.6 768.1 L2358.6 768 L2354.6 768 L2350.6 767.9 L2346.6 767.9 L2342.6 767.8 L2338.6 767.8 L2334.6 767.7 L2330.6 767.7 L2326.6 767.6 L2322.6 767.6 L2318.6 767.5 L2314.6 767.5 L2310.6 767.4 L2306.6 767.3 L2302.6 767.3 L2298.6 767.2 L2294.6 767.2 L2290.6 767.1 L2286.6 767 L2282.6 767 L2278.6 766.9 L2274.6 766.8 L2270.6 766.8 L2266.6 766.7 L2262.6 766.6 L2258.6 766.6 L2254.6 766.5 L2250.6 766.4 L2246.6 766.4 L2242.6 766.3 L2238.6 766.2 L2234.6 766.1 L2230.6 766 L2226.6 766 L2222.6 765.9 L2218.6 765.8 L2214.6 765.7 L2210.6 765.6 L2206.6 765.5 L2202.6 765.5 L2198.6 765.4 L2194.6 765.3 L2190.6 765.2 L2186.6 765.1 L2182.6 765 L2178.6 764.9 L2174.6 764.8 L2170.6 764.7 L2166.6 764.6 L2162.6 764.5 L2158.6 764.4 L2154.6 764.3 L2150.6 764.2 L2146.6 764.1 L2142.6 763.9 L2138.6 763.8 L2134.6 763.7 L2130.6 763.6 L2126.6 763.5 L2122.6 763.3 L2118.6 763.2 L2114.6 763.1 L2110.6 763 L2106.6 762.8 L2102.6 762.7 L2098.6 762.6 L2094.6 762.4 L2090.6 762.3 L2086.6 762.1 L2082.6 762 L2078.6 761.8 L2074.6 761.7 L2070.6 761.5 L2066.6 761.4 L2062.6 761.2 L2058.6 761.1 L2054.6 760.9 L2050.6 760.7 L2046.6 760.6 L2042.6 760.4 L2038.6 760.2 L2034.6 760 L2030.6 759.8 L2026.6 759.7 L2022.6 759.5 L2018.6 759.3 L2014.6 759.1 L2010.6 758.9 L2006.6 758.7 L2002.6 758.5 L1998.6 758.3 L1994.6 758.1 L1990.6 757.9 L1986.6 757.6 L1982.6 757.4 L1978.6 757.2 L1974.6 757 L1970.6 756.7 L1966.6 756.5 L1962.6 756.3 L1958.6 756 L1954.6 755.8 L1950.6 755.5 L1946.6 755.2 L1942.6 755 L1938.6 754.7 L1934.6 754.4 L1930.6 754.2 L1926.6 753.9 L1922.6 753.6 L1918.6 753.3 L1914.6 753 L1910.6 752.7 L1906.6 752.4 L1902.6 752.1 L1898.6 751.8 L1894.6 751.5 L1890.6 751.1 L1886.6 750.8 L1882.6 750.5 L1878.6 750.1 L1874.6 749.8 L1870.6 749.4 L1866.6 749.1 L1862.6 748.7 L1858.6 748.3 L1854.6 748 L1850.6 747.6 L1846.6 747.2 L1842.6 746.8 L1838.6 746.4 L1834.6 746 L1830.6 745.6 L1826.6 745.1 L1822.6 744.7 L1818.6 744.3 L1814.6 743.8 L1810.6 743.4 L1806.6 742.9 L1802.6 742.4 L1798.6 741.9 L1794.6 741.5 L1790.6 741 L1786.6 740.5 L1782.6 740 L1778.6 739.4 L1774.6 738.9 L1770.6 738.4 L1766.6 737.8 L1762.6 737.3 L1758.6 736.7 L1754.6 736.1 L1750.6 735.5 L1746.6 734.9 L1742.6 734.3 L1738.6 733.7 L1734.6 733.1 L1730.6 732.5 L1726.6 731.8 L1722.6 731.2 L1718.6 730.5 L1714.6 729.8 L1710.6 729.1 L1706.6 728.4 L1702.6 727.7 L1698.6 727 L1694.6 726.3 L1690.6 725.5 L1686.6 724.7 L1682.6 724 L1678.6 723.2 L1674.6 722.4 L1670.6 721.6 L1666.6 720.7 L1662.6 719.9 L1658.6 719 L1654.6 718.2 L1650.6 717.3 L1646.6 716.4 L1642.6 715.5 L1638.6 714.5 L1634.6 713.6 L1630.6 712.6 L1626.6 711.6 L1622.6 710.6 L1618.6 709.6 L1614.6 708.6 L1610.6 707.5 L1606.6 706.5 L1602.6 705.4 L1598.6 704.3 L1594.6 703.2 L1590.6 702 L1586.6 700.9 L1582.6 699.7 L1578.6 698.5 L1574.6 697.3 L1570.6 696 L1566.6 694.8 L1562.6 693.5 L1558.6 692.2 L1554.6 690.9 L1550.6 689.5 L1546.6 688.2 L1542.6 686.8 L1538.6 685.4 L1534.6 683.9 L1530.6 682.5 L1526.6 681 L1522.6 679.5 L1518.6 677.9 L1514.6 676.4 L1510.6 674.8 L1506.6 673.1 L1502.6 671.5 L1498.6 669.8 L1494.6 668.1 L1490.6 666.4 L1486.6 664.6 L1482.6 662.8 L1478.6 661 L1474.6 659.2 L1470.6 657.3 L1466.6 655.4 L1462.6 653.4 L1458.6 651.5 L1454.6 649.5 L1450.6 647.4 L1446.6 645.3 L1442.6 643.2 L1438.6 641.1 L1434.6 638.9 L1430.6 636.7 L1426.6 634.4 L1422.6 632.1 L1418.6 629.8 L1414.6 627.4 L1410.6 625 L1406.6 622.5 L1402.6 620 L1398.6 617.5 L1394.6 614.9 L1390.6 612.3 L1386.6 609.6 L1382.6 606.9 L1378.6 604.1 L1374.6 601.3 L1370.6 598.5 L1366.6 595.6 L1362.6 592.6 L1358.6 589.6 L1354.6 586.5 L1350.6 583.4 L1346.6 580.2 L1342.6 577 L1338.6 573.7 L1334.6 570.4 L1330.6 567 L1326.6 563.6 L1322.6 560 L1318.6 556.5 L1314.6 552.8 L1310.6 549.1 L1306.6 545.3 L1302.6 541.4 L1298.6 537.5 L1294.6 533.4 L1290.6 529.3 L1286.6 525.1 L1282.6 520.8 L1278.6 516.4 L1274.6 511.9 L1270.6 507.2 Z" fill="#d95319"/>
<path d="M601.5 506.6 H1272" stroke="#d95319" stroke-width="3.4" fill="none"/>
<path d="M566 220 V795 H2520 M565 221 H2520" stroke="#282828" stroke-width="1.9" fill="none"/>
<path d="M603.5 796V800M664.2 796V800M724.9 796V800M785.5 796V800M846.2 796V800M906.9 796V800M967.6 796V800M1028.2 796V800M1088.9 796V800M1149.6 796V800M1210.3 796V800M1270.9 796V800M1331.6 796V800M1392.3 796V800M1453 796V800M1513.7 796V800M1574.3 796V800M1635 796V800M1695.7 796V800M1756.4 796V800M1817 796V800M1877.7 796V800M1938.4 796V800M1999.1 796V800M2059.7 796V800M2120.4 796V800M2181.1 796V800M2241.8 796V800M2302.5 796V800M2363.1 796V800M2423.8 796V800M2484.5 796V800" stroke="#282828" stroke-width="1.9" fill="none"/>
<path d="M560.5 301.6H565M560.5 404.3H565M560.5 507H565M560.5 609.7H565M560.5 712.4H565" stroke="#282828" stroke-width="1.9" fill="none"/>
<g font-family="Liberation Sans, Arial, sans-serif" font-size="14.5" fill="#333">
<text x="603.5" y="814" text-anchor="middle">0</text><text x="664.2" y="814" text-anchor="middle">0.1</text><text x="724.9" y="814" text-anchor="middle">0.2</text><text x="785.5" y="814" text-anchor="middle">0.3</text><text x="846.2" y="814" text-anchor="middle">0.4</text><text x="906.9" y="814" text-anchor="middle">0.5</text><text x="967.6" y="814" text-anchor="middle">0.6</text><text x="1028.2" y="814" text-anchor="middle">0.7</text><text x="1088.9" y="814" text-anchor="middle">0.8</text><text x="1149.6" y="814" text-anchor="middle">0.9</text><text x="1210.3" y="814" text-anchor="middle">1.0</text><text x="1270.9" y="814" text-anchor="middle">1.1</text><text x="1331.6" y="814" text-anchor="middle">1.2</text><text x="1392.3" y="814" text-anchor="middle">1.3</text><text x="1453" y="814" text-anchor="middle">1.4</text><text x="1513.7" y="814" text-anchor="middle">1.5</text><text x="1574.3" y="814" text-anchor="middle">1.6</text><text x="1635" y="814" text-anchor="middle">1.7</text><text x="1695.7" y="814" text-anchor="middle">1.8</text><text x="1756.4" y="814" text-anchor="middle">1.9</text><text x="1817" y="814" text-anchor="middle">2.0</text><text x="1877.7" y="814" text-anchor="middle">2.1</text><text x="1938.4" y="814" text-anchor="middle">2.2</text><text x="1999.1" y="814" text-anchor="middle">2.3</text><text x="2059.7" y="814" text-anchor="middle">2.4</text><text x="2120.4" y="814" text-anchor="middle">2.5</text><text x="2181.1" y="814" text-anchor="middle">2.6</text><text x="2241.8" y="814" text-anchor="middle">2.7</text><text x="2302.5" y="814" text-anchor="middle">2.8</text><text x="2363.1" y="814" text-anchor="middle">2.9</text><text x="2423.8" y="814" text-anchor="middle">3.0</text><text x="2484.5" y="814" text-anchor="middle">3.1</text>
<text x="555" y="305.9" text-anchor="end">0.004</text>
<text x="555" y="408.6" text-anchor="end">0.002</text>
<text x="555" y="511.3" text-anchor="end">0</text>
<text x="555" y="614" text-anchor="end">-0.002</text>
<text x="555" y="716.7" text-anchor="end">-0.004</text>
</g>
<rect x="568" y="196" width="12" height="12" fill="#0072bd"/><rect x="1041" y="196" width="12" height="12" fill="#d95319"/><rect x="1488" y="196" width="12" height="12" fill="#80d680"/>
<g font-family="Liberation Sans, Arial, sans-serif" font-size="18" fill="#333">
<text x="586.5" y="208.3">Out3:1(1) (Run 5: SmartSpeakerHexagon (Simulation))</text>
<text x="1059" y="208.3">Out3:1(1) (Run 6: SmartSpeakerHexagon (SIL/PIL))</text>
<text x="1506" y="208.3">Tolerance</text>
</g>
<rect x="1384" y="218" width="537.5" height="35" fill="#fcfcfc" stroke="#a9a9a9" stroke-width="2"/>
<text x="1391.3" y="240" font-family="Liberation Sans, Arial, sans-serif" font-size="18.07" fill="#333">Compare To: Out3:1(1) (Run 6: SmartSpeakerHexagon (SIL/PIL))</text>
<clipPath id="shc"><rect x="2380" y="249.600" width="140" height="8"/></clipPath><rect x="2390" y="227" width="140" height="25.5" rx="7" fill="#000" fill-opacity="0.16" clip-path="url(#shc)"/>
<rect x="2388.900" y="224" width="140" height="25" rx="6.5" fill="#fff" fill-opacity="0.78" stroke="#bdbdbd" stroke-width="1.2"/>
<text x="2396.500" y="242" font-family="Liberation Sans, Arial, sans-serif" font-size="17.95" fill="#6e6e6e">Time Plot</text>
<circle cx="2484" cy="237" r="4" fill="#c2c2c2"/><circle cx="2496" cy="237" r="4" fill="#c2c2c2"/><circle cx="2508" cy="237" r="4" fill="#c2c2c2"/>
</svg>
<!-- bottom chart -->
<svg class="abs" style="left:493px;top:830px" width="2025" height="640" viewBox="493 830 2025 640">
<rect x="566" y="870" width="1960" height="575" fill="#fff"/>
<path d="M603.5 871V1444M664.2 871V1444M724.9 871V1444M785.5 871V1444M846.2 871V1444M906.9 871V1444M967.6 871V1444M1028.2 871V1444M1088.9 871V1444M1149.6 871V1444M1210.3 871V1444M1270.9 871V1444M1331.6 871V1444M1392.3 871V1444M1453 871V1444M1513.7 871V1444M1574.3 871V1444M1635 871V1444M1695.7 871V1444M1756.4 871V1444M1817 871V1444M1877.7 871V1444M1938.4 871V1444M1999.1 871V1444M2059.7 871V1444M2120.4 871V1444M2181.1 871V1444M2241.8 871V1444M2302.5 871V1444M2363.1 871V1444M2423.8 871V1444M2484.5 871V1444" stroke="#d1d1d3" stroke-width="1.25" fill="none"/>
<path d="M567 920.5H2518M567 999.1H2518M567 1077.7H2518M567 1156.3H2518M567 1234.9H2518M567 1313.5H2518M567 1392.1H2518" stroke="#d1d1d3" stroke-width="1.25" fill="none"/>
<rect x="602.8" y="894.5" width="1880.8" height="524.5" fill="#7dcd73" fill-opacity="0.2" stroke="#82d882" stroke-width="1.3"/>
<rect x="602" y="870.9" width="1882.4" height="5" fill="#3da53d"/>
<path d="M603.3 873.4 H2484.4" stroke="#008000" stroke-width="3.2" stroke-dasharray="2 0.93" fill="none"/>
<path d="M1265 1154.1 L1285.2 1154.1 L1287.3 1150.9 L1289.4 1150.2 L1291.5 1152.2 L1292.9 1154.3 L1297.1 1154.3 L1299.2 1146 L1301.2 1146.7 L1303.3 1147.4 L1306.1 1146 L1308.2 1145.3 L1309.6 1139 L1313.1 1135.5 L1315.9 1137.6 L1316.6 1148.8 L1317.7 1150.2 L1318 1154.3 L1329.8 1154.3 L1331.9 1152.2 L1334 1151.5 L1335.8 1153.7 L1336.8 1154.6 L1350.1 1154.3 L1351.7 1146.7 L1352.8 1127.2 L1355.6 1126.5 L1357.7 1130.6 L1359.1 1121.6 L1361.5 1117.4 L1362.9 1122.3 L1364.3 1124.4 L1365.1 1135.5 L1365.7 1137.6 L1366.1 1154.3 L1367.5 1154.3 L1368.5 1150.9 L1369.6 1134.8 L1371 1125.8 L1373.1 1120.2 L1375.2 1117.4 L1378 1117.4 L1379.3 1120.2 L1381.4 1120.9 L1382.8 1129.2 L1384.9 1130.6 L1386.3 1132.7 L1388.4 1130.6 L1391.2 1127.8 L1393.3 1131.3 L1394.7 1118.1 L1396.1 1114.6 L1398.2 1118.1 L1398.9 1129.2 L1399.6 1141.8 L1400.3 1143.2 L1401 1153.2 L1403 1154.1 L1404.4 1151.5 L1406.5 1150.9 L1407.2 1136.2 L1409.3 1129.2 L1411.1 1134.8 L1412.1 1147.4 L1413.5 1148.8 L1414.2 1154.3 L1417 1154.3 L1417.7 1150.9 L1419.8 1150.2 L1421.2 1146 L1422.3 1134.8 L1423.3 1134.1 L1425.1 1138.3 L1426.5 1109.7 L1427.9 1093 L1429.3 1091.6 L1431.2 1095.8 L1432.3 1101.3 L1434 1100.7 L1435.4 1104.1 L1437.2 1103.9 L1438.6 1113.2 L1440 1117.4 L1441 1153 L1443.5 1154.1 L1446.3 1154.6 L1449.8 1154.6 L1451.2 1151.5 L1453.2 1152.2 L1455.3 1151.5 L1457.4 1153.7 L1458.5 1155 L1460.2 1151.5 L1461.9 1148.8 L1463 1139.7 L1464.7 1131.3 L1466.9 1131.3 L1467.9 1139.7 L1469.3 1141.8 L1470 1147.4 L1471.4 1127.2 L1472.8 1125.1 L1473 1079.7 L1474.2 1078.3 L1475.3 1080.4 L1475.6 1114.6 L1476.7 1116.7 L1477.2 1133.4 L1478.3 1132.7 L1479.5 1125.8 L1480.4 1124.4 L1480.9 1097.2 L1482 1096.5 L1483.9 1098.6 L1484.6 1127.8 L1485.3 1129.2 L1486 1147.4 L1488.1 1147.4 L1489.8 1151.5 L1490.9 1153.7 L1493.7 1153.7 L1496.5 1153.7 L1498.2 1154.6 L1500 1149.5 L1501.3 1148.8 L1502.8 1151.5 L1505.5 1151.5 L1507.6 1151.5 L1509 1154.3 L1513.2 1154.6 L1513.9 1151.5 L1515.3 1136.2 L1518.1 1135.5 L1519.1 1109 L1520.9 1108 L1523 1111.1 L1523.2 1147.4 L1524.4 1149.5 L1527.2 1149.5 L1528.3 1154.6 L1534.1 1154.6 L1535.5 1151.5 L1537.6 1151.5 L1539.7 1150.2 L1541.1 1151.5 L1541.8 1154.6 L1556.4 1154.6 L1557.1 1150.2 L1559.2 1147.4 L1560.9 1148.1 L1561.7 1136.2 L1563.1 1112.5 L1564.5 1068.6 L1566.2 1056.7 L1567.6 1047.7 L1569.3 1047 L1570.1 1060.9 L1571.1 1063 L1571.8 1111.8 L1572.5 1112.5 L1573.2 1137.6 L1575.3 1137.6 L1576.7 1136.9 L1578.5 1139.7 L1579 1154.6 L1580.4 1154.6 L1581.2 1147.4 L1582.2 1146 L1582.7 1133.4 L1584 1132.7 L1586 1136.2 L1586.8 1151.5 L1588.2 1154.6 L1592 1154.6 L1593.4 1151.5 L1594.8 1152.2 L1597.6 1153.7 L1602.1 1152.7 L1604.2 1150.2 L1605.9 1151.9 L1607 1154.4 L1607.7 1132.1 L1609.1 1130 L1609.5 1094.4 L1610.9 1093 L1611.8 1101.4 L1612.8 1103.5 L1613.7 1127.9 L1615.6 1130 L1616.5 1153 L1618.1 1151.6 L1620.9 1154.4 L1623.7 1153.7 L1625.4 1153 L1625.9 1145.3 L1627.9 1143.9 L1629.6 1144.9 L1630.1 1127.2 L1631.5 1125.1 L1631.8 1061.7 L1633.2 1059.6 L1633.5 996.8 L1635.1 995.2 L1637.1 996.8 L1637.7 1077.7 L1639.7 1078.4 L1640.4 1098.6 L1641.5 1100 L1641.8 1154.4 L1644.6 1154.7 L1646.3 1150.9 L1648.1 1148.5 L1649.5 1150.2 L1650.2 1154.4 L1651.3 1153.7 L1651.9 1149.1 L1653.7 1144.4 L1655.1 1145.3 L1655.8 1154.7 L1657.2 1154.7 L1657.7 1148.1 L1659.7 1147.4 L1660.5 1136.3 L1662.2 1135.6 L1663.3 1116.8 L1664.4 1115.4 L1665 1088.2 L1666.7 1086.8 L1668.6 1088.2 L1669.2 1106.3 L1671.1 1107 L1672.8 1110.5 L1673.6 1115.4 L1674.5 1116.8 L1675.3 1139.8 L1677 1140.2 L1678.1 1147.4 L1679.2 1148.8 L1679.8 1124.4 L1680.9 1123 L1681.4 1101.4 L1682.5 1100.7 L1683.7 1102.8 L1684.2 1111.9 L1685.9 1110.9 L1687.6 1111.9 L1688.4 1118.2 L1689.2 1119.5 L1690.1 1141.2 L1691.2 1142.5 L1691.8 1090.3 L1692.9 1088.6 L1693.2 999.6 L1694.5 998.2 L1694.8 969.6 L1696.5 968.2 L1698.5 968.9 L1699.3 1030.3 L1700.1 1031 L1700.7 1042.2 L1702.6 1042.6 L1703.5 1051.2 L1704.6 1052.6 L1705.1 1109.8 L1706 1111.2 L1706.5 1148.8 L1707.7 1149.5 L1708.5 1131.4 L1709.6 1130 L1710.2 1109.1 L1711.5 1108.1 L1712.7 1097.2 L1713.8 1095.8 L1714.3 1077.7 L1715.5 1076.6 L1716.6 1077.7 L1717.1 1091.7 L1718.2 1093 L1718.8 1151.6 L1719.9 1152.3 L1720.5 1143.9 L1721.6 1141.8 L1721.9 1040.1 L1723 1038.7 L1723.5 1005.9 L1724.7 1004.5 L1725.8 1005.2 L1726.3 990.6 L1727.5 989.2 L1728.8 992 L1730 993.4 L1730.5 1055.4 L1731.6 1056.8 L1732.2 1126.5 L1733.6 1129.3 L1734.7 1130.7 L1735.3 1154.7 L1736.7 1154.7 L1737.2 1146.7 L1738.3 1145.8 L1740 1147.4 L1740.8 1148.1 L1741.4 1110.5 L1742.5 1109.1 L1743.1 1095.8 L1744.5 1094.4 L1746.1 1095.1 L1747.2 1097.9 L1748.1 1099.3 L1748.7 1118.8 L1749.5 1120.2 L1750.3 1141.2 L1751.4 1142.5 L1752 1133.5 L1753.1 1132.4 L1754.2 1133.5 L1754.8 1154.7 L1759 1154.7 L1759.5 1146.7 L1760.6 1145.8 L1761.5 1147.2 L1762 1153.7 L1763.4 1153.7 L1764.5 1150.9 L1765.9 1151.6 L1767 1147.2 L1768.2 1146 L1768.7 1136.3 L1769.6 1135.6 L1770.4 1136.3 L1771 1150.9 L1772.3 1153.7 L1774.3 1154.7 L1776.4 1154.7 L1777.8 1151.6 L1779.9 1148.5 L1781.3 1148.8 L1781.8 1120.2 L1783 1118.8 L1783.5 1097.2 L1784.6 1096.1 L1786 1098.6 L1787.1 1100 L1787.7 1119.5 L1788.8 1120.2 L1789.6 1117.5 L1790.8 1116.1 L1791.3 1104.9 L1792.4 1103.9 L1793.5 1107.7 L1794.7 1109.1 L1795.2 1136.3 L1796.3 1137.7 L1796.9 1151.3 L1798.6 1151.6 L1800.2 1153.7 L1800.8 1154.7 L1801.3 1134.9 L1802.5 1133.5 L1802.8 1090.3 L1804.1 1088.9 L1805.5 1090 L1806.7 1091 L1807.2 1141.2 L1808.3 1142.5 L1808.9 1154.7 L1811.2 1154.7 L1812.7 1151.6 L1814.7 1150.2 L1816.1 1153 L1817.5 1154.1 L1819.6 1153 L1821.7 1153.7 L1823.1 1151.9 L1825.2 1151.9 L1826.6 1153.7 L1827.6 1153.7 L1828.1 1112.3 L1829.2 1110.9 L1829.5 1064.5 L1830.6 1063.1 L1831.2 1024 L1832.3 1022.6 L1834.3 1023 L1835.4 1024 L1835.9 1154.7 L1836.8 1154.7 L1837.3 1129 L1838.7 1127.9 L1840.7 1128.2 L1841.2 1142.5 L1842.3 1143.5 L1842.9 1127.2 L1844 1125.8 L1844.6 1100.7 L1845.7 1099.3 L1846.8 1103.1 L1848.2 1104.9 L1848.8 1130.7 L1850.2 1131 L1851.5 1132.1 L1852.1 1150.9 L1853.5 1153.7 L1855.9 1153 L1858 1153.7 L1859.4 1151.6 L1861 1151.3 L1862.2 1150.2 L1864.9 1149.9 L1867.7 1150.5 L1868.4 1154.4 L1870 1154.4 L1870.5 1151.9 L1871.9 1151.9 L1872.8 1154.4 L1875.4 1154.4 L1877.5 1153.3 L1878.9 1154.7 L1883.1 1154.7 L1884.5 1151.9 L1886.1 1151.9 L1886.7 1143.9 L1887.8 1142.5 L1888.4 1122.3 L1889.5 1120.9 L1890 1106.3 L1891.2 1104.9 L1891.7 1095.1 L1892.8 1094.4 L1893.9 1096.1 L1894.8 1093.8 L1895.9 1093.3 L1896.7 1103.1 L1897.8 1104.5 L1898.4 1153 L1899.8 1151.9 L1901.2 1153.7 L1902.6 1153.7 L1903.4 1148.1 L1904.5 1146.7 L1905.1 1133.5 L1906.2 1132.4 L1907.9 1134.6 L1909.3 1132.8 L1910.1 1131.8 L1910.7 1114 L1912.1 1112.6 L1914 1113.3 L1914.9 1127.9 L1916 1129.3 L1916.5 1154.7 L1922.1 1154.7 L1922.7 1149.1 L1924.9 1148.5 L1928 1148.5 L1928.8 1139.1 L1929.9 1138 L1930.5 1110.5 L1931.6 1109.1 L1931.9 1030.3 L1933.3 1028.6 L1934.9 1028.9 L1935.8 1047.7 L1936.9 1049.1 L1937.5 1103.5 L1938.6 1104.9 L1939.1 1154.7 L1940.2 1154.7 L1941.7 1151.6 L1943.3 1152.3 L1945 1150.2 L1946.1 1150.2 L1946.7 1139.8 L1947.8 1138.4 L1948.4 1068.7 L1949.5 1066.5 L1949.8 1056.8 L1951.2 1055.4 L1952.3 1057.5 L1952.5 1063.1 L1953.7 1064.5 L1953.9 1112.6 L1955.1 1114 L1955.6 1145.3 L1956.7 1146.7 L1957 1154.7 L1960.2 1154.7 L1960.6 1146.7 L1962.6 1145.8 L1963.2 1123.7 L1964.3 1122.3 L1964.8 1106.3 L1965.9 1105.3 L1967 1107 L1967.6 1112.6 L1968.7 1114 L1969 1148.8 L1970.1 1150.2 L1970.4 1154.7 L1977.9 1154.7 L1978.5 1150.9 L1980.4 1150.2 L1981.8 1151.6 L1982.4 1153.7 L1984.1 1153 L1986.3 1153.3 L1988.1 1153.7 L1989.5 1154.7 L1990.2 1152.7 L1991.9 1151.9 L1993 1153.7 L1994.7 1152.7 L1995.5 1150.5 L1996.6 1150.5 L1997.5 1153 L2000 1153.3 L2002.8 1153.7 L2004.1 1153 L2005.8 1153.7 L2007.5 1153.7 L2008.6 1152.7 L2010 1153.3 L2011.1 1154.7 L2012.5 1153.7 L2013.1 1150.9 L2014.5 1150.2 L2015.6 1151.9 L2018.1 1151.9 L2019.5 1153 L2020.9 1153.7 L2022.5 1153 L2023.1 1136 L2024.2 1134.9 L2024.5 1109.1 L2025.6 1108.1 L2027.6 1108.1 L2028.7 1109.1 L2029 1138.4 L2030.4 1139.8 L2030.9 1141.6 L2032.6 1141.8 L2033.2 1150.2 L2034.8 1150.9 L2035.4 1136.3 L2036.5 1135.2 L2037.6 1136.3 L2037.9 1141.2 L2039 1142.5 L2039.6 1154.4 L2041.2 1154.7 L2041.8 1153 L2043.5 1152.7 L2044.3 1143.9 L2045.4 1142.5 L2046.5 1143.5 L2047.1 1131.8 L2048.2 1130.4 L2049.6 1127.9 L2050.2 1062.4 L2051.3 1061 L2051.6 1015 L2052.9 1013.6 L2054.9 1013.6 L2055.7 1014.3 L2056 1028.2 L2057.1 1029.6 L2057.4 1064.5 L2058.5 1065.9 L2059.1 1094.4 L2060.2 1095.8 L2060.8 1102.1 L2061.6 1103.5 L2062.2 1150.2 L2063.8 1150.9 L2064.9 1154.7 L2066.2 1154.7 L2066.6 1145.3 L2067.7 1143.9 L2068.3 1139.3 L2069.7 1138.4 L2070.5 1139.8 L2071.1 1148.1 L2072.8 1147.4 L2074.7 1148.1 L2075.5 1136.3 L2076.7 1134.9 L2077.2 1124.4 L2078.3 1123 L2078.9 1107.7 L2080 1106.7 L2081.1 1107.7 L2082.2 1109.1 L2083.1 1104.9 L2084.5 1103.9 L2086.4 1103.9 L2087.2 1104.9 L2087.5 1131.8 L2089.5 1132.4 L2090.3 1133.5 L2090.9 1154.7 L2092 1154.4 L2093.1 1153 L2093.7 1116.8 L2094.8 1115.4 L2095.1 1063.8 L2096.2 1062.4 L2096.7 1031 L2097.8 1030 L2100.1 1030 L2100.6 1031 L2101.2 1108.4 L2103.2 1108.7 L2103.7 1148.1 L2105.9 1148.8 L2106.8 1154.7 L2114.3 1154.7 L2116 1152.7 L2117.8 1151.3 L2119.9 1150.2 L2121.3 1147.7 L2122.9 1147.2 L2124.6 1148.1 L2126 1148.1 L2126.6 1085.4 L2127.7 1084 L2128.2 1062.4 L2129.4 1061 L2129.6 1041.5 L2130.8 1040.1 L2131.3 1025.4 L2132.7 1024 L2134.1 1026.1 L2134.9 1026.8 L2135.5 1040.8 L2136.6 1041.5 L2136.9 1070.7 L2138 1071.8 L2138.6 1112.6 L2139.7 1113.7 L2140.2 1076.3 L2141.3 1075.2 L2143.6 1075.2 L2144.4 1076.3 L2144.7 1099.3 L2145.5 1100 L2146.4 1102.8 L2147.2 1102.1 L2147.8 1080.5 L2148.9 1079.4 L2150.3 1081.9 L2151.4 1083.3 L2151.9 1100.7 L2153.1 1102.1 L2153.6 1130.7 L2154.5 1131.8 L2155 1148.1 L2156.1 1147.2 L2156.7 1116.8 L2157.8 1115.6 L2158.9 1116.8 L2159.5 1120.9 L2160.3 1120.2 L2161.2 1107.7 L2162.3 1106.7 L2163.4 1107.7 L2163.9 1116.1 L2165.1 1117 L2165.6 1150.2 L2166.7 1151.6 L2167.3 1154.7 L2168.7 1154.7 L2169.2 1147.7 L2171.2 1147.2 L2171.8 1131.4 L2172.9 1130 L2174 1127.9 L2175.1 1127.9 L2176.5 1129.6 L2177.1 1148.1 L2178.7 1148.8 L2181.2 1148.5 L2182.6 1149.5 L2183.2 1154.7 L2185.1 1154.7 L2185.7 1150.9 L2187.1 1148.1 L2188.2 1147.4 L2189 1149.1 L2189.6 1153 L2191 1153.7 L2192.1 1154.7 L2192.7 1142.5 L2193.8 1141.2 L2194.3 1068.7 L2195.5 1067.2 L2195.7 1047.7 L2196.8 1046.3 L2198 1047.7 L2198.5 1051.2 L2199.4 1051.9 L2199.9 1090.3 L2201 1091.7 L2201.6 1102.1 L2202.7 1103.5 L2203.3 1116.1 L2204.1 1117.5 L2204.7 1141.8 L2205.5 1142.5 L2206.1 1127.2 L2207.2 1125.8 L2207.4 1086.8 L2208.6 1085.4 L2209.1 1059.6 L2210.2 1058.2 L2210.8 1044.2 L2211.9 1042.8 L2212.5 1037.3 L2213.6 1035.9 L2215.3 1035.9 L2216.4 1037.3 L2216.7 1058.9 L2217.5 1060.3 L2218.1 1143.9 L2220 1144.9 L2220.6 1154.7 L2225 1154.7 L2225.9 1142.5 L2227 1141.2 L2227.2 1106.3 L2228.4 1104.9 L2228.7 1073.5 L2229.8 1072.1 L2230.3 1033.8 L2231.4 1032.4 L2231.7 1008.7 L2232.8 1007.3 L2233.9 1008 L2234.5 1084.7 L2235.6 1086.1 L2236.2 1106.7 L2238.1 1107.3 L2239 1113.3 L2239.8 1114.7 L2240.4 1131.4 L2241.5 1132.8 L2242 1153 L2243.7 1151.9 L2244.8 1154.7 L2246.8 1154.7 L2247.9 1153 L2249.6 1154.7 L2251 1154.7 L2251.2 1102.1 L2252.3 1100.7 L2253.5 1102.1 L2254 1106.3 L2256 1107 L2256.5 1107 L2257.1 1138.4 L2258.2 1139.1 L2259 1131.4 L2260.2 1129.3 L2261 1130.4 L2261.6 1154.7 L2266.3 1154.7 L2267.7 1153 L2268.2 1148.1 L2269.4 1147.2 L2270.2 1148.8 L2270.8 1154.7 L2272.2 1154.7 L2272.7 1148.1 L2273.6 1146.7 L2273.8 1125.8 L2274.9 1124.4 L2276.1 1125.8 L2276.6 1131 L2277.4 1131.8 L2278 1091 L2279.1 1090 L2281.1 1090 L2281.9 1091 L2282.5 1143.9 L2283.7 1154.7 L2286.8 1154.7 L2287.4 1142.5 L2288.5 1141.2 L2289 1137.7 L2290.2 1136.3 L2291.6 1135.6 L2292.1 1132.1 L2292.9 1131 L2293.5 1123 L2294.6 1121.6 L2295.7 1124 L2296.3 1126.5 L2297.4 1127.9 L2298 1154.7 L2299.1 1154.7 L2299.6 1152.3 L2301 1151.9 L2301.9 1154.1 L2306.1 1154.7 L2306.9 1149.5 L2308.3 1148.8 L2309.4 1150.2 L2309.9 1151.9 L2311.1 1149.5 L2312.7 1148.8 L2313.9 1150.9 L2315.2 1153 L2316.7 1154.7 L2317.2 1143.9 L2318.3 1142.5 L2318.9 1118.2 L2320 1116.8 L2320.6 1109.1 L2321.7 1108.1 L2323.1 1109.5 L2323.9 1110.5 L2324.4 1132.1 L2326.4 1132.8 L2327 1148.1 L2328.6 1148.5 L2330.3 1149.5 L2330.9 1142.5 L2332 1141.2 L2332.5 1132.8 L2333.9 1131.8 L2335.6 1130.7 L2337 1131.4 L2337.6 1139.8 L2339 1140.5 L2339.8 1116.8 L2340.9 1115.6 L2342.3 1116.5 L2342.6 1089.6 L2343.7 1088.2 L2344.2 1047.7 L2345.4 1046.3 L2346.5 1047.7 L2347 1064.5 L2348.2 1065.2 L2348.7 1028.2 L2349.8 1026.8 L2350.1 1011.5 L2351.5 1010.1 L2352.6 1011.5 L2353.2 1033.1 L2354.3 1034.5 L2354.6 1073.5 L2355.7 1074.9 L2356.2 1132.1 L2357.4 1133.5 L2357.9 1153 L2359.3 1151.9 L2359.9 1150.2 L2362.1 1150.2 L2363.8 1151.9 L2366 1151.6 L2367.7 1153 L2368.8 1154.7 L2370.2 1153.7 L2371.9 1150.9 L2373.5 1150.2 L2375.2 1148.1 L2375.8 1134.9 L2376.9 1133.5 L2377.4 1122.3 L2378.6 1121.6 L2379.9 1120.9 L2381.1 1120.2 L2381.6 1093 L2382.7 1091.7 L2383.3 1080.5 L2384.4 1079.4 L2385.5 1080.5 L2386.1 1098.6 L2387.2 1100 L2387.8 1080.5 L2388.9 1079.4 L2391.1 1079.4 L2391.9 1079.8 L2392.2 1047 L2393.3 1045.6 L2393.6 1024 L2395 1022.6 L2396.1 1024 L2396.4 1037.3 L2397.5 1038.7 L2398.1 1094.4 L2399.2 1095.8 L2399.5 1148.1 L2401.2 1147.4 L2403.1 1147.7 L2403.9 1153 L2405.1 1153.7 L2405.9 1147.7 L2407 1146.3 L2407.6 1119.3 L2408.7 1117.9 L2409 1107.7 L2410.1 1106.7 L2411.2 1108.4 L2411.5 1112.6 L2412.6 1113.3 L2413.1 1130.7 L2414.2 1132.1 L2414.8 1141.2 L2415.9 1142.5 L2416.5 1148.8 L2417.6 1149.5 L2417.9 1127.6 L2419 1126.5 L2420.1 1127.6 L2420.7 1154.7 L2422.1 1154.7 L2422.3 1148.1 L2423.5 1147.2 L2424.6 1148.1 L2424.8 1154.7 L2427.6 1154.7 L2428.2 1148.1 L2429.3 1146.7 L2429.9 1140.5 L2431 1139.3 L2431.3 1128.6 L2432.4 1127.2 L2432.9 1117.5 L2434.1 1116.1 L2434.3 1107.3 L2435.4 1106.3 L2437.1 1106.7 L2438 1104.9 L2438.8 1098.6 L2439.9 1097.2 L2440.2 1078.4 L2441.3 1077 L2442.4 1078.4 L2443 1104.9 L2445.2 1105.3 L2445.8 1136.3 L2446.9 1137.7 L2447.4 1147.7 L2449.7 1147.4 L2450.2 1113.7 L2451.3 1112.6 L2453.9 1112.6 L2454.7 1116.8 L2456.9 1117 L2457.8 1132.1 L2458.9 1133.5 L2459.7 1135.6 L2463.3 1135.6 L2463.9 1154.7 L2466.4 1155.1 L2469.2 1154.1 L2470.9 1153 L2473.4 1153 L2474.2 1132.1 L2475.3 1130.7 L2475.9 1041.5 L2477.3 1040.3 L2479.8 1040.3 L2480.6 1041.2 L2480.9 1029.6 L2482.3 1028.2 L2484.2 1028.9 L2484.8 1054 L2485.9 1055.4 L2486.3 1154.7 L2486.9 1158.4 L2486.6 1163.9 L2485.8 1166 L2484.1 1165.6 L2483.3 1161.4 L2482.4 1160 L2481.1 1159.1 L2479.1 1159.5 L2477.7 1160.9 L2477.1 1183.2 L2475.8 1184.2 L2475.2 1236.7 L2473 1237.6 L2472.4 1255.7 L2471 1257.1 L2470.4 1265 L2469.1 1264.6 L2468.5 1252.9 L2467.4 1251.5 L2466.6 1242.7 L2464.3 1242.3 L2464.1 1242.3 L2463.6 1211.6 L2462.8 1210.2 L2462.2 1184.9 L2461.1 1183.5 L2460.2 1166.5 L2458 1167.4 L2456.6 1166.5 L2456.1 1159.1 L2454.1 1160 L2452.4 1159.5 L2450.5 1158.7 L2450.2 1204.7 L2449.1 1206.1 L2448.5 1237.8 L2446.6 1237.6 L2446 1186.2 L2445.2 1184.9 L2444.6 1164.2 L2443.8 1162.8 L2442.9 1159.5 L2439.3 1159.1 L2434.6 1159.1 L2432.3 1160 L2432.1 1203.7 L2431 1205.1 L2430.4 1258.8 L2427.3 1259 L2426.5 1258.1 L2425.9 1205.1 L2424.8 1206.1 L2424.3 1217.2 L2422.6 1216.7 L2421.8 1212.5 L2420.6 1211.1 L2420.1 1181 L2419 1182.3 L2418.4 1198.5 L2416.4 1198.1 L2415.9 1188.8 L2415.1 1187.4 L2414.5 1160 L2412.3 1160.5 L2410 1159.5 L2408.4 1160 L2407.8 1182.8 L2406.7 1184.2 L2406.1 1192.5 L2404.7 1193 L2403.6 1191.5 L2402.2 1191.8 L2401.7 1234.8 L2398.3 1234.4 L2397.8 1174.4 L2396.9 1173 L2396.1 1165.6 L2395 1166 L2393.6 1164.6 L2392.8 1160 L2390.5 1159.8 L2388.8 1160.9 L2388.3 1187 L2386.3 1186.5 L2385.8 1166 L2384.7 1164.6 L2383.6 1160 L2382.2 1159.5 L2380.5 1160.5 L2378.8 1160 L2376.8 1160.9 L2376.3 1183.5 L2373.8 1184.2 L2373.5 1283.6 L2372.4 1285 L2371.8 1293.3 L2370.2 1292.9 L2369.6 1279.4 L2368.5 1278 L2367.9 1222.2 L2366.8 1220.8 L2366.2 1209.3 L2364.9 1210 L2362.3 1209.3 L2361.5 1197.4 L2360.4 1198.1 L2359.8 1210.7 L2357.9 1210.2 L2357.3 1184.9 L2356.2 1183.5 L2355.4 1163.7 L2353.7 1164.6 L2352 1163.7 L2350.9 1160 L2349.2 1159.5 L2347.3 1161.4 L2344.8 1161.2 L2342.8 1159.5 L2340.9 1160 L2340.6 1180 L2339.5 1181.4 L2338.7 1183.8 L2337 1183.2 L2336.4 1164.6 L2335.3 1163.7 L2334.5 1160 L2333.3 1159.5 L2332.8 1176.2 L2329.7 1175.8 L2329.2 1171.6 L2328.1 1170.2 L2327.2 1162.3 L2325 1161.8 L2323 1160.9 L2321.3 1160 L2319.7 1159.8 L2319.4 1206.1 L2318 1207.5 L2317.4 1217.2 L2316.1 1216.7 L2315.2 1210 L2314.1 1211.1 L2313.6 1216.7 L2312.7 1217.6 L2312.2 1256.2 L2311 1257.7 L2310.5 1292.5 L2309.4 1293.9 L2308.8 1317.3 L2305.5 1317 L2304.9 1273 L2303.8 1271.6 L2303.2 1242 L2302.1 1241.3 L2301.6 1256.7 L2300.2 1257.7 L2299 1259 L2297.9 1258.5 L2297.4 1239 L2296.2 1237.6 L2295.7 1180 L2294.3 1179 L2293.8 1159.5 L2291.8 1161.4 L2291.2 1177.2 L2290.1 1178.6 L2289.6 1260.4 L2288.4 1261.8 L2287.9 1289.2 L2284.5 1288.8 L2284 1268.8 L2282.9 1267.4 L2282.3 1223.6 L2281.2 1222.2 L2280.6 1163.2 L2279.8 1162.3 L2279 1159.5 L2277.8 1160 L2277.3 1163.7 L2275.1 1164.2 L2274.5 1201.9 L2272 1202.3 L2271.4 1246.5 L2270.3 1247.9 L2270 1297.1 L2268.9 1298.5 L2268.4 1326.4 L2267.2 1327.8 L2266.7 1333.8 L2265 1333.4 L2264.5 1316.6 L2263.3 1315.2 L2262.5 1223.2 L2261.7 1221.8 L2261.1 1161.8 L2260 1162.5 L2259.4 1182.1 L2258.3 1183.2 L2257.5 1189.7 L2255.8 1189.3 L2255.3 1168.1 L2254.1 1166.7 L2253.6 1158.7 L2252.5 1159.8 L2251.6 1177.6 L2250.5 1179 L2249.4 1180 L2248.6 1197.1 L2247.7 1198.8 L2246.6 1200.5 L2244.9 1200.2 L2244.1 1251.5 L2242.4 1251.8 L2240.8 1250.7 L2240.5 1193.5 L2239.6 1192.1 L2239.1 1160.5 L2238 1160 L2237.1 1163.7 L2236 1165.1 L2234.3 1166 L2232.1 1165.6 L2231.6 1159.5 L2230.2 1159.8 L2229.6 1195.3 L2228.5 1196.3 L2228.2 1283.6 L2226.8 1285 L2226.2 1311.5 L2224.6 1311.1 L2224 1294.3 L2222.9 1292.5 L2222.3 1278 L2221.2 1276.6 L2220.7 1262.7 L2219.8 1261.3 L2219.3 1190.7 L2218.2 1189.3 L2217.6 1163.2 L2215.4 1162.8 L2214.3 1160.9 L2212.6 1159.1 L2209.2 1159.5 L2208.4 1162.5 L2207.3 1163.7 L2206.7 1179.3 L2205.1 1178.6 L2204.2 1163.2 L2202.6 1162.8 L2200.9 1161.4 L2198.7 1160.9 L2197 1159.1 L2195.6 1159.8 L2195 1198.5 L2193.3 1198.8 L2192.2 1199.9 L2191.4 1206.5 L2189.7 1205.8 L2188.9 1196 L2188.1 1196.7 L2187.5 1245.1 L2186.1 1246.5 L2185.5 1255.7 L2183.9 1255.3 L2183.3 1200.5 L2182.5 1199.1 L2181.9 1163.2 L2180.8 1163.7 L2180.2 1187.4 L2179.1 1188.8 L2178 1194.3 L2176.3 1193.5 L2175.8 1160.9 L2174.7 1160 L2174.1 1166.7 L2172.7 1167 L2171.6 1168.1 L2171 1254.9 L2170.2 1256.2 L2168.5 1257.4 L2167.4 1256.2 L2166.8 1226.4 L2165.7 1225 L2165.5 1178.6 L2164.3 1177.2 L2163.5 1162.8 L2161.3 1162.5 L2160.2 1160 L2157.9 1160.9 L2157.4 1171.2 L2156.2 1172.6 L2155.7 1182.3 L2154 1181.8 L2153.5 1167 L2152.3 1166 L2151 1163.7 L2149.6 1161.4 L2148.4 1158.1 L2147.6 1160.5 L2145.9 1161.4 L2145.1 1165.6 L2143.4 1165.1 L2142.3 1160 L2140.1 1159.5 L2139.5 1165.6 L2137.8 1166 L2136.7 1165.1 L2135.1 1163.2 L2133.4 1161.4 L2132.3 1159.5 L2127.8 1160 L2127.8 1164.6 L2127.2 1203.7 L2124.1 1203.3 L2123.3 1182.8 L2122.8 1181.4 L2121.9 1177.9 L2120.8 1179.3 L2120.2 1196.7 L2119.1 1198.1 L2118.6 1232.5 L2117.4 1233.9 L2116.9 1251.5 L2113.6 1251.5 L2113 1233.7 L2111.9 1231.6 L2110.8 1229.8 L2109.9 1223.2 L2109.1 1221.8 L2108.2 1214.8 L2107.4 1213.5 L2106.8 1182.8 L2106 1181.4 L2105.2 1168.8 L2103.8 1165.6 L2102.1 1164.6 L2100.2 1162.8 L2098.5 1160.5 L2097.4 1157.7 L2095.1 1159.1 L2094.6 1168.1 L2093.8 1169.5 L2092.3 1171.6 L2091.2 1172 L2089.8 1170.6 L2088.4 1165.1 L2086.8 1162.8 L2084.8 1160 L2082.6 1159.1 L2079.5 1159.1 L2078.4 1160 L2077.8 1177.2 L2076.7 1178.6 L2076.2 1186.5 L2074.2 1187.4 L2073.7 1203.7 L2072.6 1205.1 L2072 1233.4 L2069.8 1233.9 L2069.2 1250.1 L2068.4 1251.1 L2067.5 1254.3 L2065.9 1253.9 L2065.3 1233 L2064.5 1233 L2063.9 1235.1 L2060.8 1234.8 L2060 1167.8 L2058.9 1166.5 L2057.2 1164.6 L2055.5 1162.3 L2053.6 1160 L2051.9 1159.1 L2049.7 1159.1 L2048.3 1160 L2047.7 1182.1 L2046.6 1183.5 L2046.1 1303.7 L2044.1 1304.5 L2043.5 1339.9 L2041.6 1339.6 L2041 1283.6 L2040.2 1282.2 L2039.6 1258.5 L2038.8 1257.1 L2038.2 1204.1 L2037.1 1202.7 L2036.6 1179.6 L2035.2 1179.3 L2033.2 1178.6 L2032.4 1171.2 L2031 1170.6 L2029.9 1173 L2028.2 1172.3 L2027.7 1163.7 L2026.8 1162.8 L2024.9 1163.9 L2024 1174.8 L2022.9 1175.8 L2022.1 1184.9 L2019.8 1185.1 L2018.7 1186.2 L2018.2 1193.9 L2017 1195.3 L2016.5 1231.2 L2015.4 1232.5 L2014.8 1272.4 L2013.7 1273.8 L2013.2 1284.6 L2011.5 1284.1 L2010.9 1276.6 L2009.8 1272.4 L2009 1269.2 L2007.3 1268.8 L2006.7 1243.2 L2005.6 1241.8 L2005.1 1196.3 L2004.2 1194.9 L2003.7 1185.6 L2002.5 1184.2 L2001.7 1177.2 L2000.6 1175.8 L1999.8 1179.3 L1998.4 1178.6 L1997.5 1179.6 L1997 1227.8 L1995.9 1229.2 L1995.3 1237.8 L1993.9 1237.6 L1993.3 1233.7 L1992 1234.8 L1988.9 1234.4 L1988.3 1202.3 L1987.5 1200.9 L1986.7 1196 L1985.5 1196.7 L1985 1216.7 L1984.1 1218 L1983.3 1223.2 L1980.8 1223.9 L1980.2 1268.2 L1979.1 1269.6 L1978.8 1311.5 L1977.2 1311.1 L1976.9 1265.7 L1975.8 1264.3 L1975.2 1236.7 L1974.4 1235.3 L1973.8 1223.9 L1972.7 1222.5 L1972.2 1196.7 L1971 1195.3 L1970.8 1169.5 L1969.9 1167.8 L1968.8 1164.6 L1967.4 1162.3 L1966.3 1161.8 L1966 1189.7 L1964.6 1190.2 L1963 1191.1 L1962.4 1251.5 L1960.4 1251.1 L1960.2 1230.2 L1959 1228.8 L1958.5 1216.2 L1957.7 1214.8 L1957.1 1193 L1956.2 1191.5 L1955.7 1169.2 L1954.9 1168.1 L1953.5 1165.3 L1952.1 1162.3 L1951 1159.1 L1949.8 1160 L1949 1165.3 L1947.9 1166 L1946.8 1167.4 L1946.2 1183.5 L1945.1 1184.9 L1944.5 1249.7 L1943.4 1251.5 L1942.9 1271 L1939.5 1271 L1939 1220.8 L1937.8 1219.4 L1937.3 1170.9 L1936.2 1168.8 L1935.1 1163.9 L1934.2 1158.7 L1930.3 1159.1 L1929.8 1168.1 L1928.7 1169.5 L1927.8 1177.6 L1926.7 1177.9 L1925.6 1179.3 L1925 1233.4 L1923.9 1234.8 L1923.3 1251.5 L1921.4 1251.1 L1920.8 1241.8 L1920 1240.4 L1919.4 1223.2 L1918.6 1221.8 L1918 1200.2 L1917.2 1198.8 L1916.7 1188.8 L1915.5 1187.4 L1915 1163.9 L1914.1 1163.2 L1912.5 1161.2 L1911.1 1159.1 L1909.4 1160 L1908.3 1163.7 L1906.6 1164.6 L1905.8 1170.2 L1904.7 1171.6 L1904.1 1192.5 L1902.4 1193 L1901.3 1194.3 L1900.8 1205.1 L1897.7 1204.7 L1897.1 1172.3 L1896 1170.9 L1895.5 1160 L1894.3 1159.5 L1893.2 1161.2 L1892.1 1161.4 L1891 1159.1 L1889.9 1160 L1889.3 1171.6 L1888.2 1173 L1887.7 1229.8 L1886.5 1230.9 L1886 1245.5 L1884.3 1244.8 L1884 1230.9 L1882.9 1229.5 L1882.3 1223.2 L1881.2 1220.4 L1880.1 1216.7 L1879.3 1216.9 L1878.7 1221.1 L1877 1221.4 L1875.9 1222.5 L1875.4 1249.7 L1873.4 1249.3 L1873.2 1228.1 L1872.3 1229.2 L1869 1228.8 L1868.1 1205.8 L1867 1207.2 L1866.5 1213.9 L1863.9 1214.4 L1863.4 1241.8 L1861.7 1242.3 L1860.9 1243.2 L1860.3 1281.3 L1857 1281.1 L1856.7 1269.2 L1855.6 1267.8 L1855 1250.1 L1852.5 1249.7 L1852.2 1223.2 L1851.1 1221.8 L1850.8 1163.9 L1849.7 1163.2 L1846.7 1162.8 L1845.5 1159.5 L1844.4 1160.5 L1842.8 1163.9 L1841.9 1165.6 L1840.5 1166.5 L1839.7 1168.8 L1838.3 1169.5 L1837.5 1174.8 L1836.1 1174.4 L1835.2 1170.6 L1833.3 1170.2 L1832.7 1159.1 L1831.6 1159.8 L1831 1178.6 L1829.9 1180 L1829.4 1189.3 L1828.2 1190.4 L1827.7 1195.3 L1826 1195.7 L1824.9 1196.7 L1824.3 1243.7 L1822.4 1243.4 L1822.1 1215.8 L1821 1214.4 L1820.4 1195.7 L1818.2 1195.3 L1817.7 1188.3 L1816.5 1187 L1815.7 1180 L1814.6 1181.4 L1814.3 1214.1 L1813.5 1215.3 L1812.3 1218.3 L1811 1218 L1810.4 1211.3 L1809.3 1208.6 L1807.6 1206.5 L1807 1185.6 L1805.9 1184.2 L1805.4 1160.5 L1804 1161.2 L1803.4 1172.3 L1802.3 1173 L1801.5 1180.4 L1799.8 1180 L1799.2 1172 L1798.1 1170.9 L1797.3 1176.2 L1793.9 1175.8 L1793.4 1163.2 L1792.3 1161.2 L1790.6 1159.5 L1788.4 1161.8 L1786.7 1162.5 L1785 1163.9 L1783.6 1163.2 L1782.8 1166.7 L1781.7 1168.1 L1781.1 1203.7 L1780 1204.7 L1780 1251.8 L1778.8 1253.2 L1778 1262.2 L1776.9 1261.5 L1776.3 1248.3 L1775.2 1246.9 L1774.7 1219.7 L1773.5 1218.3 L1773 1180.7 L1771.9 1179.3 L1770.8 1174.4 L1769.6 1175.1 L1769.1 1186.2 L1768 1187.7 L1767.4 1218.3 L1766.3 1219.7 L1765.6 1246.9 L1764.2 1246.9 L1763.2 1240.6 L1762.4 1239.2 L1761.8 1246.2 L1760.4 1247.6 L1759.6 1275.8 L1756.8 1275.5 L1756.2 1223.9 L1754.9 1222.5 L1754.4 1166 L1752.3 1165.3 L1751 1159.8 L1744.5 1159.8 L1743.2 1163.9 L1742.6 1194.6 L1741.5 1196 L1740.9 1213.5 L1739.8 1214.8 L1739.2 1274.8 L1738.1 1276.2 L1737.3 1295 L1735.9 1295 L1735.3 1282.5 L1734.2 1281.1 L1733.7 1185.6 L1732.5 1184.2 L1732 1166.5 L1730.3 1166 L1729.3 1163.2 L1727.2 1160 L1723.1 1160 L1722.5 1202.7 L1721.7 1203.7 L1720.6 1207.9 L1719.2 1207.2 L1718.6 1196.7 L1717.5 1195.3 L1716.8 1164.6 L1715.4 1160.5 L1710.5 1159.5 L1704.4 1160 L1703.8 1168.8 L1702.7 1168.8 L1702.2 1159.5 L1700.8 1159.5 L1698 1163.2 L1696.6 1159.8 L1693 1160.5 L1692.1 1187 L1690.7 1187 L1690.2 1181.4 L1689 1180 L1688.2 1163.2 L1686.1 1159.1 L1684 1161.2 L1681 1161.8 L1680.1 1168.8 L1678.7 1168.8 L1677.8 1163.9 L1674.3 1161.2 L1670.8 1159.1 L1668.7 1162.5 L1667.3 1162.8 L1666.6 1160 L1661.7 1160.5 L1661.2 1180 L1660 1181.4 L1659.5 1205.8 L1658.4 1207.2 L1657.5 1215.5 L1656.1 1215.3 L1655.6 1189 L1654.7 1187.7 L1653.9 1179.3 L1652.8 1180 L1652 1186.5 L1649.9 1187.4 L1649.2 1194.6 L1648 1196.7 L1645.7 1198.1 L1643.3 1198.1 L1642.9 1213.9 L1640.8 1213.5 L1640.1 1166 L1638 1166.5 L1635.2 1166 L1634.5 1159.8 L1633.5 1159.1 L1633 1177.2 L1631.9 1178.6 L1631 1186.5 L1629.1 1187 L1628.2 1191.1 L1627.1 1193.2 L1626.3 1203 L1624.1 1203.7 L1622.1 1205.1 L1621.3 1202.3 L1619.9 1199.5 L1619.2 1187 L1615.4 1186.5 L1615 1159.1 L1613.8 1159.1 L1612.6 1163.9 L1610.7 1163.9 L1610.1 1191.8 L1609 1193.2 L1608.5 1210.7 L1605.9 1211.3 L1605.4 1236.5 L1602.9 1237.2 L1602 1253.2 L1600.6 1252.5 L1600.1 1226 L1599 1224.6 L1598.1 1216.9 L1597 1215.5 L1596.5 1240.6 L1595.3 1242 L1594.5 1257.4 L1591.4 1257.1 L1590.9 1220.4 L1589.9 1218.3 L1589.5 1191.8 L1588.5 1190.4 L1587.8 1180 L1586.7 1178.6 L1586.4 1160.9 L1583.3 1161.2 L1583.1 1204.1 L1582 1205.8 L1581.1 1211.1 L1579.7 1210.7 L1579.2 1191.1 L1578.3 1189.7 L1578 1165.3 L1576.9 1163.9 L1576 1159.8 L1573.9 1159.1 L1573.2 1161.2 L1571.1 1163.9 L1569.4 1163.9 L1568.3 1159.8 L1564.8 1157.7 L1562.7 1159.8 L1562.2 1182.8 L1561 1184.6 L1560.8 1239.2 L1559.6 1240.6 L1559.2 1283.9 L1557.8 1286 L1556.8 1290.8 L1555.7 1289.4 L1555 1267.1 L1554.1 1265 L1553.7 1226.7 L1552.2 1225.3 L1551.5 1207.9 L1550.2 1207.5 L1549.6 1216.7 L1548.5 1216.9 L1547.4 1213.9 L1545.3 1215.5 L1543.5 1214.8 L1542.9 1198.8 L1541.8 1196.7 L1541.1 1175.1 L1540.1 1175.8 L1539.7 1239.2 L1538.3 1241.3 L1536.9 1244.8 L1535.5 1248.3 L1534.8 1258.8 L1533.7 1263.7 L1532.7 1267.1 L1531.3 1269.6 L1530.4 1268.5 L1529.9 1254.6 L1528.5 1252.5 L1527.8 1210 L1526.7 1207.9 L1526.2 1165.3 L1524.4 1168.1 L1523 1168.8 L1520.9 1164.6 L1520.2 1159.1 L1517.5 1159.1 L1517.1 1170.9 L1516 1172.3 L1515.6 1208.6 L1514.6 1210 L1513.9 1216.9 L1512.2 1216.9 L1511.8 1208.6 L1510.8 1205.8 L1509.7 1194.6 L1508.6 1191.8 L1507.2 1190.4 L1506.7 1216.7 L1501.3 1216.7 L1498 1216.9 L1497.5 1226 L1495.2 1226.4 L1494.7 1232.3 L1493.3 1235.1 L1492.7 1255.3 L1491.6 1256 L1490.9 1250.4 L1489.5 1247.6 L1488.8 1202.3 L1487.7 1200.2 L1487.4 1165.3 L1485.3 1165.6 L1483.5 1163.9 L1481.8 1159.5 L1478.5 1159.5 L1477.9 1165.6 L1474.3 1165.6 L1473.5 1159.5 L1467.9 1160 L1464.4 1159.1 L1462 1160.5 L1461.2 1179.3 L1458.1 1179.3 L1456.7 1173.7 L1455.6 1167.4 L1454.4 1168.1 L1453.9 1187 L1452.5 1188.3 L1451.2 1184.9 L1449.8 1186.5 L1447.7 1187 L1446.3 1180 L1444.9 1175.8 L1442.8 1170.9 L1441.4 1163.9 L1440 1159.1 L1439.3 1159.6 L1432.3 1159.2 L1429.5 1159.9 L1425.4 1159.2 L1423.3 1159.9 L1422.6 1168.3 L1420.1 1169 L1419.5 1195.5 L1416.7 1195.5 L1416.3 1182.2 L1414.9 1180.1 L1414.2 1170.4 L1412.8 1169.7 L1412.1 1159.9 L1410 1159.2 L1407.2 1158.5 L1406.5 1159.9 L1405.8 1182.2 L1404.4 1182.2 L1403 1175.3 L1401.4 1173.9 L1399.6 1173.2 L1398.2 1166.2 L1396.8 1161.3 L1395.4 1158.5 L1387.7 1158.5 L1385.6 1159.9 L1383.5 1158.5 L1373.8 1158.5 L1370.3 1159.9 L1368.9 1164.1 L1368.2 1168.6 L1365.1 1168.3 L1364.3 1160.2 L1362.6 1159.9 L1361.2 1158.2 L1355.6 1158.5 L1354 1159.9 L1352.8 1178 L1351.7 1183.6 L1348.7 1183.6 L1347.3 1177.3 L1344.2 1176 L1342.8 1171.1 L1341.7 1173.2 L1338.9 1173.6 L1335.4 1173.2 L1334.7 1161.3 L1333.6 1159.9 L1333 1165.5 L1331.7 1168.3 L1330.5 1176 L1327 1176.7 L1325.7 1179.4 L1324.7 1185.3 L1323.3 1185 L1321.5 1178 L1320.1 1168.3 L1318.7 1164.4 L1315.9 1164.1 L1314.5 1159.2 L1312.4 1158.5 L1306.8 1158.5 L1302.7 1158.5 L1299.9 1159.2 L1299.2 1165.5 L1297.8 1171.8 L1295 1171.8 L1293.6 1166.2 L1291.5 1159.9 L1289.4 1159.2 L1287.3 1157.4 L1272.7 1157.8 L1270.6 1159.2 L1268.5 1157.8 L1265 1157.4 Z" fill="#ff3010"/>
<path d="M601.5 1155.9 H1290" stroke="#ff3010" stroke-width="3.4" fill="none"/>
<path d="M566 869 V1445 H2520 M565 870 H2520" stroke="#282828" stroke-width="1.9" fill="none"/>
<path d="M603.5 1446V1450M664.2 1446V1450M724.9 1446V1450M785.5 1446V1450M846.2 1446V1450M906.9 1446V1450M967.6 1446V1450M1028.2 1446V1450M1088.9 1446V1450M1149.6 1446V1450M1210.3 1446V1450M1270.9 1446V1450M1331.6 1446V1450M1392.3 1446V1450M1453 1446V1450M1513.7 1446V1450M1574.3 1446V1450M1635 1446V1450M1695.7 1446V1450M1756.4 1446V1450M1817 1446V1450M1877.7 1446V1450M1938.4 1446V1450M1999.1 1446V1450M2059.7 1446V1450M2120.4 1446V1450M2181.1 1446V1450M2241.8 1446V1450M2302.5 1446V1450M2363.1 1446V1450M2423.8 1446V1450M2484.5 1446V1450" stroke="#282828" stroke-width="1.9" fill="none"/>
<path d="M560.5 920.5H565M560.5 999.1H565M560.5 1077.7H565M560.5 1156.3H565M560.5 1234.9H565M560.5 1313.5H565M560.5 1392.1H565" stroke="#282828" stroke-width="1.9" fill="none"/>
<g font-family="Liberation Sans, Arial, sans-serif" font-size="14.5" fill="#333">
<text x="603.5" y="1464" text-anchor="middle">0</text><text x="664.2" y="1464" text-anchor="middle">0.1</text><text x="724.9" y="1464" text-anchor="middle">0.2</text><text x="785.5" y="1464" text-anchor="middle">0.3</text><text x="846.2" y="1464" text-anchor="middle">0.4</text><text x="906.9" y="1464" text-anchor="middle">0.5</text><text x="967.6" y="1464" text-anchor="middle">0.6</text><text x="1028.2" y="1464" text-anchor="middle">0.7</text><text x="1088.9" y="1464" text-anchor="middle">0.8</text><text x="1149.6" y="1464" text-anchor="middle">0.9</text><text x="1210.3" y="1464" text-anchor="middle">1.0</text><text x="1270.9" y="1464" text-anchor="middle">1.1</text><text x="1331.6" y="1464" text-anchor="middle">1.2</text><text x="1392.3" y="1464" text-anchor="middle">1.3</text><text x="1453" y="1464" text-anchor="middle">1.4</text><text x="1513.7" y="1464" text-anchor="middle">1.5</text><text x="1574.3" y="1464" text-anchor="middle">1.6</text><text x="1635" y="1464" text-anchor="middle">1.7</text><text x="1695.7" y="1464" text-anchor="middle">1.8</text><text x="1756.4" y="1464" text-anchor="middle">1.9</text><text x="1817" y="1464" text-anchor="middle">2.0</text><text x="1877.7" y="1464" text-anchor="middle">2.1</text><text x="1938.4" y="1464" text-anchor="middle">2.2</text><text x="1999.1" y="1464" text-anchor="middle">2.3</text><text x="2059.7" y="1464" text-anchor="middle">2.4</text><text x="2120.4" y="1464" text-anchor="middle">2.5</text><text x="2181.1" y="1464" text-anchor="middle">2.6</text><text x="2241.8" y="1464" text-anchor="middle">2.7</text><text x="2302.5" y="1464" text-anchor="middle">2.8</text><text x="2363.1" y="1464" text-anchor="middle">2.9</text><text x="2423.8" y="1464" text-anchor="middle">3.0</text><text x="2484.5" y="1464" text-anchor="middle">3.1</text>
<text x="555" y="924.8" text-anchor="end">9.0e-6</text>
<text x="555" y="1003.4" text-anchor="end">6.0e-6</text>
<text x="555" y="1082" text-anchor="end">3.0e-6</text>
<text x="555" y="1160.6" text-anchor="end">0</text>
<text x="555" y="1239.2" text-anchor="end">-3.0e-6</text>
<text x="555" y="1317.8" text-anchor="end">-6.0e-6</text>
<text x="555" y="1396.4" text-anchor="end">-9.0e-6</text>
</g>
<rect x="568" y="846" width="12" height="12" fill="#80d680"/><rect x="679" y="846" width="12" height="12" fill="#ff3010"/>
<g font-family="Liberation Sans, Arial, sans-serif" font-size="18" fill="#333"><text x="586.5" y="858.3">Tolerance</text><text x="697" y="858.3">Difference</text></g>
</svg>
</body>
</html>
